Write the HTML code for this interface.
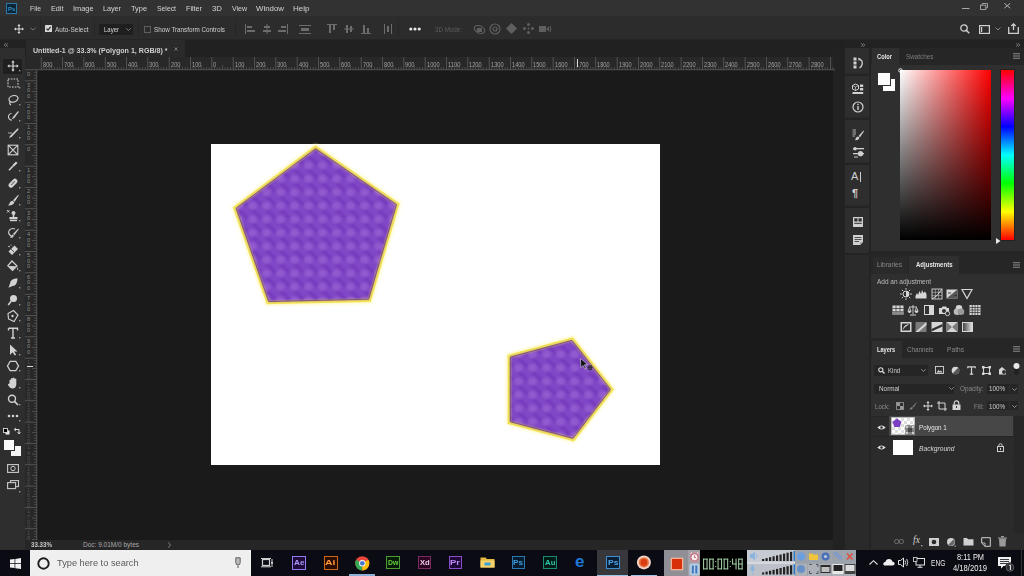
<!DOCTYPE html><html><head><meta charset="utf-8"><style>
*{margin:0;padding:0;box-sizing:border-box}
html,body{width:1024px;height:576px;overflow:hidden;background:#1a1a1a;font-family:"Liberation Sans",sans-serif;color:#ccc}
.a{position:absolute}
.t{position:absolute;white-space:nowrap;line-height:1;transform-origin:0 0}
svg{position:absolute;overflow:visible}
</style></head><body>
<div class="a" style="left:0px;top:0px;width:1024px;height:16px;background:#323232;"></div>
<div class="a" style="left:0px;top:16px;width:1024px;height:23px;background:#2c2c2c;"></div>
<div class="a" style="left:0px;top:39px;width:1024px;height:1px;background:#252525;"></div>
<div class="a" style="left:0px;top:40px;width:1024px;height:8px;background:#222222;"></div>
<div class="a" style="left:0px;top:48px;width:25px;height:502px;background:#2e2e2e;"></div>
<div class="a" style="left:25px;top:40px;width:820px;height:17px;background:#212121;"></div>
<div class="a" style="left:26px;top:40px;width:159px;height:17px;background:#2a2a2a;"></div>
<div class="a" style="left:25px;top:57px;width:810px;height:13px;background:#282828;"></div>
<div class="a" style="left:25px;top:70px;width:12px;height:470px;background:#282828;"></div>
<div class="a" style="left:37px;top:70px;width:796px;height:470px;background:#1a1a1a;"></div>
<div class="a" style="left:833px;top:48px;width:12px;height:502px;background:#222222;"></div>
<div class="a" style="left:845px;top:48px;width:24px;height:502px;background:#2a2a2a;"></div>
<div class="a" style="left:869px;top:48px;width:155px;height:502px;background:#282828;"></div>
<div class="a" style="left:211px;top:144px;width:449px;height:321px;background:#ffffff;"></div>
<div class="a" style="left:25px;top:540px;width:808px;height:10px;background:#262626;"></div>
<div class="a" style="left:0px;top:550px;width:1024px;height:26px;background:#0b0b14;"></div>
<div class="a" style="left:30px;top:550px;width:221px;height:26px;background:#efefef;"></div>
<svg style="left:6px;top:3px;" width="11" height="11" viewBox="0 0 11 11"><rect x="0.5" y="0.5" width="10" height="10" fill="#0d2536" stroke="#2a7aa6" stroke-width="1"/><text x="2" y="8" font-size="6" font-family="Liberation Sans" font-weight="bold" fill="#3a90c4">Ps</text></svg>
<div class="t" style="left:30.00px;top:4.95px;font-size:7.5px;color:#d4d4d4;transform:scaleX(0.910);">File</div>
<div class="t" style="left:51.00px;top:4.95px;font-size:7.5px;color:#d4d4d4;transform:scaleX(0.967);">Edit</div>
<div class="t" style="left:73.00px;top:4.95px;font-size:7.5px;color:#d4d4d4;transform:scaleX(0.984);">Image</div>
<div class="t" style="left:103.00px;top:4.95px;font-size:7.5px;color:#d4d4d4;transform:scaleX(0.960);">Layer</div>
<div class="t" style="left:131.00px;top:4.95px;font-size:7.5px;color:#d4d4d4;transform:scaleX(0.984);">Type</div>
<div class="t" style="left:157.00px;top:4.95px;font-size:7.5px;color:#d4d4d4;transform:scaleX(0.912);">Select</div>
<div class="t" style="left:186.00px;top:4.95px;font-size:7.5px;color:#d4d4d4;transform:scaleX(0.960);">Filter</div>
<div class="t" style="left:212.00px;top:4.95px;font-size:7.5px;color:#d4d4d4;transform:scaleX(1.043);">3D</div>
<div class="t" style="left:231.50px;top:4.95px;font-size:7.5px;color:#d4d4d4;transform:scaleX(0.931);">View</div>
<div class="t" style="left:256.00px;top:4.95px;font-size:7.5px;color:#d4d4d4;transform:scaleX(1.050);">Window</div>
<div class="t" style="left:293.00px;top:4.95px;font-size:7.5px;color:#d4d4d4;transform:scaleX(1.070);">Help</div>
<svg style="left:961.5px;top:7.5px;" width="8" height="1" viewBox="0 0 8 1"><rect x="0" y="0" width="7.5" height="1" fill="#a8a8a8"/></svg>
<svg style="left:980px;top:3px;" width="8" height="7" viewBox="0 0 8 7"><path d="M2.2 2.2V0.5H7.5V4.8H5.8" fill="none" stroke="#a8a8a8" stroke-width="0.9"/><rect x="0.5" y="2.2" width="5.3" height="4.3" fill="none" stroke="#a8a8a8" stroke-width="0.9"/></svg>
<svg style="left:1004px;top:3.3px;" width="7" height="5.5" viewBox="0 0 7 5.5"><path d="M0.3 0.3L6.3 5.2M6.3 0.3L0.3 5.2" stroke="#b0b0b0" stroke-width="1"/></svg>
<svg style="left:14px;top:24px;" width="10" height="10" viewBox="0 0 10 10"><path d="M5 1V9M1 5H9" stroke="#dcdcdc" stroke-width="1"/><path d="M5 0L3.4 2H6.6ZM5 10L3.4 8H6.6ZM0 5L2 3.4V6.6ZM10 5L8 3.4V6.6Z" fill="#dcdcdc"/></svg>
<svg style="left:30px;top:27px;" width="6" height="4" viewBox="0 0 6 4"><path d="M0.5 0.8L3 3L5.5 0.8" fill="none" stroke="#777" stroke-width="1"/></svg>
<div class="a" style="left:40px;top:19px;width:1px;height:17px;background:#262626;"></div>
<svg style="left:45px;top:25px;" width="7" height="7" viewBox="0 0 7 7"><rect x="0" y="0" width="7" height="7" rx="0.5" fill="#d6d6d6"/><path d="M1.5 3.6L3 5.1L5.6 1.9" fill="none" stroke="#2a2a2a" stroke-width="1.2"/></svg>
<div class="t" style="left:54.50px;top:25.57px;font-size:7px;color:#cfcfcf;transform:scaleX(0.926);">Auto-Select</div>
<div class="a" style="left:94px;top:19px;width:1px;height:17px;background:#262626;"></div>
<div class="a" style="left:99px;top:24px;width:34px;height:11px;background:#1f1f1f;"></div>
<div class="t" style="left:104.00px;top:26.07px;font-size:7px;color:#d8d8d8;transform:scaleX(0.857);">Layer</div>
<svg style="left:126px;top:28px;" width="5" height="3" viewBox="0 0 5 3"><path d="M0.3 0.3L2.5 2.5L4.7 0.3" fill="none" stroke="#888" stroke-width="0.9"/></svg>
<div class="a" style="left:138px;top:19px;width:1px;height:17px;background:#262626;"></div>
<svg style="left:144px;top:26px;" width="7" height="7" viewBox="0 0 7 7"><rect x="0.5" y="0.5" width="6" height="6" fill="none" stroke="#5e5e5e" stroke-width="1"/></svg>
<div class="t" style="left:153.70px;top:25.57px;font-size:7px;color:#cfcfcf;transform:scaleX(0.899);">Show Transform Controls</div>
<div class="a" style="left:235px;top:19px;width:1px;height:17px;background:#262626;"></div>
<svg style="left:245px;top:24px;" width="10" height="10" viewBox="0 0 10 10"><rect x="0" y="0" width="1" height="10" fill="#6c6c6c"/><rect x="2" y="2" width="5" height="2" fill="#6c6c6c"/><rect x="2" y="6" width="8" height="2" fill="#6c6c6c"/></svg>
<svg style="left:262px;top:24px;" width="10" height="10" viewBox="0 0 10 10"><rect x="4.5" y="0" width="1" height="10" fill="#6c6c6c"/><rect x="2" y="2" width="6" height="2" fill="#6c6c6c"/><rect x="1" y="6" width="8" height="2" fill="#6c6c6c"/></svg>
<svg style="left:278px;top:24px;" width="10" height="10" viewBox="0 0 10 10"><rect x="9" y="0" width="1" height="10" fill="#6c6c6c"/><rect x="3" y="2" width="5" height="2" fill="#6c6c6c"/><rect x="0" y="6" width="8" height="2" fill="#6c6c6c"/></svg>
<svg style="left:299px;top:25px;" width="12" height="9" viewBox="0 0 12 9"><rect x="0" y="0" width="12" height="1" fill="#6c6c6c"/><rect x="2" y="3" width="8" height="3" fill="#6c6c6c"/><rect x="0" y="8" width="12" height="1" fill="#6c6c6c"/></svg>
<svg style="left:327px;top:24px;" width="10" height="10" viewBox="0 0 10 10"><rect x="0" y="0" width="10" height="1" fill="#6c6c6c"/><rect x="2" y="1" width="2" height="8" fill="#6c6c6c"/><rect x="6" y="1" width="2" height="5" fill="#6c6c6c"/></svg>
<svg style="left:344px;top:24px;" width="10" height="10" viewBox="0 0 10 10"><rect x="0" y="4.5" width="10" height="1" fill="#6c6c6c"/><rect x="2" y="1" width="2" height="8" fill="#6c6c6c"/><rect x="6" y="2" width="2" height="6" fill="#6c6c6c"/></svg>
<svg style="left:361px;top:24px;" width="10" height="10" viewBox="0 0 10 10"><rect x="0" y="9" width="10" height="1" fill="#6c6c6c"/><rect x="2" y="1" width="2" height="8" fill="#6c6c6c"/><rect x="6" y="4" width="2" height="5" fill="#6c6c6c"/></svg>
<svg style="left:384px;top:24px;" width="8" height="10" viewBox="0 0 8 10"><rect x="0" y="0" width="1" height="10" fill="#6c6c6c"/><rect x="7" y="0" width="1" height="10" fill="#6c6c6c"/><rect x="3" y="2" width="2" height="6" fill="#6c6c6c"/></svg>
<div class="a" style="left:398px;top:19px;width:1px;height:17px;background:#262626;"></div>
<svg style="left:409px;top:27px;" width="12" height="4" viewBox="0 0 12 4"><circle cx="1.8" cy="2" r="1.6" fill="#e6e6e6"/><circle cx="6" cy="2" r="1.6" fill="#e6e6e6"/><circle cx="10.2" cy="2" r="1.6" fill="#e6e6e6"/></svg>
<div class="t" style="left:435.00px;top:25.57px;font-size:7px;color:#5c5c5c;transform:scaleX(0.890);">3D Mode:</div>
<svg style="left:473px;top:24px;" width="13" height="11" viewBox="0 0 13 11"><ellipse cx="6.5" cy="5.5" rx="5.5" ry="3.5" fill="none" stroke="#5f5f5f" stroke-width="1.2" transform="rotate(25 6.5 5.5)"/><rect x="4" y="4" width="5" height="4" fill="#5f5f5f"/></svg>
<svg style="left:489px;top:23px;" width="12" height="12" viewBox="0 0 12 12"><circle cx="6" cy="6" r="5" fill="none" stroke="#5f5f5f" stroke-width="1.2"/><circle cx="6" cy="6" r="2" fill="none" stroke="#5f5f5f" stroke-width="1.2"/></svg>
<svg style="left:506px;top:23px;" width="11" height="11" viewBox="0 0 11 11"><path d="M5.5 0L11 5.5L5.5 11L0 5.5Z" fill="#5f5f5f"/></svg>
<svg style="left:523px;top:23px;" width="11" height="11" viewBox="0 0 11 11"><circle cx="5.5" cy="1.5" r="1.5" fill="#5f5f5f"/><circle cx="5.5" cy="9.5" r="1.5" fill="#5f5f5f"/><circle cx="1.5" cy="5.5" r="1.5" fill="#5f5f5f"/><circle cx="9.5" cy="5.5" r="1.5" fill="#5f5f5f"/><circle cx="5.5" cy="5.5" r="1" fill="#5f5f5f"/></svg>
<svg style="left:539px;top:25px;" width="12" height="8" viewBox="0 0 12 8"><rect x="0" y="1" width="7" height="6" fill="#5f5f5f"/><path d="M7 4L10 1.5V6.5Z" fill="#5f5f5f"/><path d="M11 1Q12.5 4 11 7" fill="none" stroke="#5f5f5f"/></svg>
<svg style="left:960px;top:24px;" width="10" height="10" viewBox="0 0 10 10"><circle cx="4" cy="4" r="3.2" fill="none" stroke="#cfcfcf" stroke-width="1.3"/><path d="M6.3 6.3L9.3 9.3" stroke="#cfcfcf" stroke-width="1.5"/></svg>
<svg style="left:979px;top:25px;" width="11" height="9" viewBox="0 0 11 9"><rect x="0.6" y="0.6" width="9.8" height="7.8" fill="none" stroke="#cfcfcf" stroke-width="1.2"/><rect x="2" y="2" width="1.2" height="5" fill="#cfcfcf"/></svg>
<svg style="left:995px;top:27px;" width="6" height="4" viewBox="0 0 6 4"><path d="M0.5 0.5L3 3L5.5 0.5" fill="none" stroke="#888" stroke-width="1"/></svg>
<svg style="left:1008px;top:23px;" width="11" height="11" viewBox="0 0 11 11"><path d="M0.7 4V10.3H10.3V4" fill="none" stroke="#cfcfcf" stroke-width="1.3"/><path d="M5.5 7V1M3.3 3L5.5 0.8L7.7 3" fill="none" stroke="#cfcfcf" stroke-width="1.3"/></svg>
<div class="t" style="left:32.70px;top:46.65px;font-size:7.5px;color:#d0d0d0;font-weight:bold;transform:scaleX(0.945);">Untitled-1 @ 33.3% (Polygon 1, RGB/8) *</div>
<svg style="left:174px;top:47px;" width="4" height="4" viewBox="0 0 4 4"><path d="M0.5 0.5L3.5 3.5M3.5 0.5L0.5 3.5" stroke="#777" stroke-width="1"/></svg>
<svg style="left:4px;top:42.5px;" width="4" height="4" viewBox="0 0 4 4"><path d="M1.7 0.3L0.3 2L1.7 3.7M3.7 0.3L2.3 2L3.7 3.7" fill="none" stroke="#8a8a8a" stroke-width="0.8"/></svg>
<svg style="left:861px;top:42.5px;" width="4" height="4" viewBox="0 0 4 4"><path d="M0.3 0.3L1.7 2L0.3 3.7M2.3 0.3L3.7 2L2.3 3.7" fill="none" stroke="#8a8a8a" stroke-width="0.8"/></svg>
<svg style="left:1016px;top:42.5px;" width="4" height="4" viewBox="0 0 4 4"><path d="M0.3 0.3L1.7 2L0.3 3.7M2.3 0.3L3.7 2L2.3 3.7" fill="none" stroke="#8a8a8a" stroke-width="0.8"/></svg>
<svg style="left:25px;top:57px;" width="810" height="13" viewBox="0 0 810 13"><rect x="15.86" y="0" width="0.7" height="13" fill="#646464"/><rect x="18.53" y="10" width="0.6" height="3" fill="#5e5e5e"/><rect x="21.19" y="10" width="0.6" height="3" fill="#5e5e5e"/><rect x="23.86" y="10" width="0.6" height="3" fill="#5e5e5e"/><rect x="26.53" y="8" width="0.6" height="5" fill="#646464"/><rect x="29.19" y="10" width="0.6" height="3" fill="#5e5e5e"/><rect x="31.86" y="10" width="0.6" height="3" fill="#5e5e5e"/><rect x="34.52" y="10" width="0.6" height="3" fill="#5e5e5e"/><rect x="37.19" y="0" width="0.7" height="13" fill="#646464"/><rect x="39.86" y="10" width="0.6" height="3" fill="#5e5e5e"/><rect x="42.52" y="10" width="0.6" height="3" fill="#5e5e5e"/><rect x="45.19" y="10" width="0.6" height="3" fill="#5e5e5e"/><rect x="47.85" y="8" width="0.6" height="5" fill="#646464"/><rect x="50.52" y="10" width="0.6" height="3" fill="#5e5e5e"/><rect x="53.19" y="10" width="0.6" height="3" fill="#5e5e5e"/><rect x="55.85" y="10" width="0.6" height="3" fill="#5e5e5e"/><rect x="58.52" y="0" width="0.7" height="13" fill="#646464"/><rect x="61.19" y="10" width="0.6" height="3" fill="#5e5e5e"/><rect x="63.85" y="10" width="0.6" height="3" fill="#5e5e5e"/><rect x="66.52" y="10" width="0.6" height="3" fill="#5e5e5e"/><rect x="69.19" y="8" width="0.6" height="5" fill="#646464"/><rect x="71.85" y="10" width="0.6" height="3" fill="#5e5e5e"/><rect x="74.52" y="10" width="0.6" height="3" fill="#5e5e5e"/><rect x="77.18" y="10" width="0.6" height="3" fill="#5e5e5e"/><rect x="79.85" y="0" width="0.7" height="13" fill="#646464"/><rect x="82.52" y="10" width="0.6" height="3" fill="#5e5e5e"/><rect x="85.18" y="10" width="0.6" height="3" fill="#5e5e5e"/><rect x="87.85" y="10" width="0.6" height="3" fill="#5e5e5e"/><rect x="90.52" y="8" width="0.6" height="5" fill="#646464"/><rect x="93.18" y="10" width="0.6" height="3" fill="#5e5e5e"/><rect x="95.85" y="10" width="0.6" height="3" fill="#5e5e5e"/><rect x="98.51" y="10" width="0.6" height="3" fill="#5e5e5e"/><rect x="101.18" y="0" width="0.7" height="13" fill="#646464"/><rect x="103.85" y="10" width="0.6" height="3" fill="#5e5e5e"/><rect x="106.51" y="10" width="0.6" height="3" fill="#5e5e5e"/><rect x="109.18" y="10" width="0.6" height="3" fill="#5e5e5e"/><rect x="111.84" y="8" width="0.6" height="5" fill="#646464"/><rect x="114.51" y="10" width="0.6" height="3" fill="#5e5e5e"/><rect x="117.18" y="10" width="0.6" height="3" fill="#5e5e5e"/><rect x="119.84" y="10" width="0.6" height="3" fill="#5e5e5e"/><rect x="122.51" y="0" width="0.7" height="13" fill="#646464"/><rect x="125.18" y="10" width="0.6" height="3" fill="#5e5e5e"/><rect x="127.84" y="10" width="0.6" height="3" fill="#5e5e5e"/><rect x="130.51" y="10" width="0.6" height="3" fill="#5e5e5e"/><rect x="133.17" y="8" width="0.6" height="5" fill="#646464"/><rect x="135.84" y="10" width="0.6" height="3" fill="#5e5e5e"/><rect x="138.51" y="10" width="0.6" height="3" fill="#5e5e5e"/><rect x="141.17" y="10" width="0.6" height="3" fill="#5e5e5e"/><rect x="143.84" y="0" width="0.7" height="13" fill="#646464"/><rect x="146.51" y="10" width="0.6" height="3" fill="#5e5e5e"/><rect x="149.17" y="10" width="0.6" height="3" fill="#5e5e5e"/><rect x="151.84" y="10" width="0.6" height="3" fill="#5e5e5e"/><rect x="154.50" y="8" width="0.6" height="5" fill="#646464"/><rect x="157.17" y="10" width="0.6" height="3" fill="#5e5e5e"/><rect x="159.84" y="10" width="0.6" height="3" fill="#5e5e5e"/><rect x="162.50" y="10" width="0.6" height="3" fill="#5e5e5e"/><rect x="165.17" y="0" width="0.7" height="13" fill="#646464"/><rect x="167.84" y="10" width="0.6" height="3" fill="#5e5e5e"/><rect x="170.50" y="10" width="0.6" height="3" fill="#5e5e5e"/><rect x="173.17" y="10" width="0.6" height="3" fill="#5e5e5e"/><rect x="175.84" y="8" width="0.6" height="5" fill="#646464"/><rect x="178.50" y="10" width="0.6" height="3" fill="#5e5e5e"/><rect x="181.17" y="10" width="0.6" height="3" fill="#5e5e5e"/><rect x="183.83" y="10" width="0.6" height="3" fill="#5e5e5e"/><rect x="186.50" y="0" width="0.7" height="13" fill="#646464"/><rect x="189.17" y="10" width="0.6" height="3" fill="#5e5e5e"/><rect x="191.83" y="10" width="0.6" height="3" fill="#5e5e5e"/><rect x="194.50" y="10" width="0.6" height="3" fill="#5e5e5e"/><rect x="197.16" y="8" width="0.6" height="5" fill="#646464"/><rect x="199.83" y="10" width="0.6" height="3" fill="#5e5e5e"/><rect x="202.50" y="10" width="0.6" height="3" fill="#5e5e5e"/><rect x="205.16" y="10" width="0.6" height="3" fill="#5e5e5e"/><rect x="207.83" y="0" width="0.7" height="13" fill="#646464"/><rect x="210.50" y="10" width="0.6" height="3" fill="#5e5e5e"/><rect x="213.16" y="10" width="0.6" height="3" fill="#5e5e5e"/><rect x="215.83" y="10" width="0.6" height="3" fill="#5e5e5e"/><rect x="218.49" y="8" width="0.6" height="5" fill="#646464"/><rect x="221.16" y="10" width="0.6" height="3" fill="#5e5e5e"/><rect x="223.83" y="10" width="0.6" height="3" fill="#5e5e5e"/><rect x="226.49" y="10" width="0.6" height="3" fill="#5e5e5e"/><rect x="229.16" y="0" width="0.7" height="13" fill="#646464"/><rect x="231.83" y="10" width="0.6" height="3" fill="#5e5e5e"/><rect x="234.49" y="10" width="0.6" height="3" fill="#5e5e5e"/><rect x="237.16" y="10" width="0.6" height="3" fill="#5e5e5e"/><rect x="239.82" y="8" width="0.6" height="5" fill="#646464"/><rect x="242.49" y="10" width="0.6" height="3" fill="#5e5e5e"/><rect x="245.16" y="10" width="0.6" height="3" fill="#5e5e5e"/><rect x="247.82" y="10" width="0.6" height="3" fill="#5e5e5e"/><rect x="250.49" y="0" width="0.7" height="13" fill="#646464"/><rect x="253.16" y="10" width="0.6" height="3" fill="#5e5e5e"/><rect x="255.82" y="10" width="0.6" height="3" fill="#5e5e5e"/><rect x="258.49" y="10" width="0.6" height="3" fill="#5e5e5e"/><rect x="261.16" y="8" width="0.6" height="5" fill="#646464"/><rect x="263.82" y="10" width="0.6" height="3" fill="#5e5e5e"/><rect x="266.49" y="10" width="0.6" height="3" fill="#5e5e5e"/><rect x="269.15" y="10" width="0.6" height="3" fill="#5e5e5e"/><rect x="271.82" y="0" width="0.7" height="13" fill="#646464"/><rect x="274.49" y="10" width="0.6" height="3" fill="#5e5e5e"/><rect x="277.15" y="10" width="0.6" height="3" fill="#5e5e5e"/><rect x="279.82" y="10" width="0.6" height="3" fill="#5e5e5e"/><rect x="282.49" y="8" width="0.6" height="5" fill="#646464"/><rect x="285.15" y="10" width="0.6" height="3" fill="#5e5e5e"/><rect x="287.82" y="10" width="0.6" height="3" fill="#5e5e5e"/><rect x="290.48" y="10" width="0.6" height="3" fill="#5e5e5e"/><rect x="293.15" y="0" width="0.7" height="13" fill="#646464"/><rect x="295.82" y="10" width="0.6" height="3" fill="#5e5e5e"/><rect x="298.48" y="10" width="0.6" height="3" fill="#5e5e5e"/><rect x="301.15" y="10" width="0.6" height="3" fill="#5e5e5e"/><rect x="303.81" y="8" width="0.6" height="5" fill="#646464"/><rect x="306.48" y="10" width="0.6" height="3" fill="#5e5e5e"/><rect x="309.15" y="10" width="0.6" height="3" fill="#5e5e5e"/><rect x="311.81" y="10" width="0.6" height="3" fill="#5e5e5e"/><rect x="314.48" y="0" width="0.7" height="13" fill="#646464"/><rect x="317.15" y="10" width="0.6" height="3" fill="#5e5e5e"/><rect x="319.81" y="10" width="0.6" height="3" fill="#5e5e5e"/><rect x="322.48" y="10" width="0.6" height="3" fill="#5e5e5e"/><rect x="325.15" y="8" width="0.6" height="5" fill="#646464"/><rect x="327.81" y="10" width="0.6" height="3" fill="#5e5e5e"/><rect x="330.48" y="10" width="0.6" height="3" fill="#5e5e5e"/><rect x="333.14" y="10" width="0.6" height="3" fill="#5e5e5e"/><rect x="335.81" y="0" width="0.7" height="13" fill="#646464"/><rect x="338.48" y="10" width="0.6" height="3" fill="#5e5e5e"/><rect x="341.14" y="10" width="0.6" height="3" fill="#5e5e5e"/><rect x="343.81" y="10" width="0.6" height="3" fill="#5e5e5e"/><rect x="346.48" y="8" width="0.6" height="5" fill="#646464"/><rect x="349.14" y="10" width="0.6" height="3" fill="#5e5e5e"/><rect x="351.81" y="10" width="0.6" height="3" fill="#5e5e5e"/><rect x="354.47" y="10" width="0.6" height="3" fill="#5e5e5e"/><rect x="357.14" y="0" width="0.7" height="13" fill="#646464"/><rect x="359.81" y="10" width="0.6" height="3" fill="#5e5e5e"/><rect x="362.47" y="10" width="0.6" height="3" fill="#5e5e5e"/><rect x="365.14" y="10" width="0.6" height="3" fill="#5e5e5e"/><rect x="367.81" y="8" width="0.6" height="5" fill="#646464"/><rect x="370.47" y="10" width="0.6" height="3" fill="#5e5e5e"/><rect x="373.14" y="10" width="0.6" height="3" fill="#5e5e5e"/><rect x="375.80" y="10" width="0.6" height="3" fill="#5e5e5e"/><rect x="378.47" y="0" width="0.7" height="13" fill="#646464"/><rect x="381.14" y="10" width="0.6" height="3" fill="#5e5e5e"/><rect x="383.80" y="10" width="0.6" height="3" fill="#5e5e5e"/><rect x="386.47" y="10" width="0.6" height="3" fill="#5e5e5e"/><rect x="389.13" y="8" width="0.6" height="5" fill="#646464"/><rect x="391.80" y="10" width="0.6" height="3" fill="#5e5e5e"/><rect x="394.47" y="10" width="0.6" height="3" fill="#5e5e5e"/><rect x="397.13" y="10" width="0.6" height="3" fill="#5e5e5e"/><rect x="399.80" y="0" width="0.7" height="13" fill="#646464"/><rect x="402.47" y="10" width="0.6" height="3" fill="#5e5e5e"/><rect x="405.13" y="10" width="0.6" height="3" fill="#5e5e5e"/><rect x="407.80" y="10" width="0.6" height="3" fill="#5e5e5e"/><rect x="410.46" y="8" width="0.6" height="5" fill="#646464"/><rect x="413.13" y="10" width="0.6" height="3" fill="#5e5e5e"/><rect x="415.80" y="10" width="0.6" height="3" fill="#5e5e5e"/><rect x="418.46" y="10" width="0.6" height="3" fill="#5e5e5e"/><rect x="421.13" y="0" width="0.7" height="13" fill="#646464"/><rect x="423.80" y="10" width="0.6" height="3" fill="#5e5e5e"/><rect x="426.46" y="10" width="0.6" height="3" fill="#5e5e5e"/><rect x="429.13" y="10" width="0.6" height="3" fill="#5e5e5e"/><rect x="431.80" y="8" width="0.6" height="5" fill="#646464"/><rect x="434.46" y="10" width="0.6" height="3" fill="#5e5e5e"/><rect x="437.13" y="10" width="0.6" height="3" fill="#5e5e5e"/><rect x="439.79" y="10" width="0.6" height="3" fill="#5e5e5e"/><rect x="442.46" y="0" width="0.7" height="13" fill="#646464"/><rect x="445.13" y="10" width="0.6" height="3" fill="#5e5e5e"/><rect x="447.79" y="10" width="0.6" height="3" fill="#5e5e5e"/><rect x="450.46" y="10" width="0.6" height="3" fill="#5e5e5e"/><rect x="453.12" y="8" width="0.6" height="5" fill="#646464"/><rect x="455.79" y="10" width="0.6" height="3" fill="#5e5e5e"/><rect x="458.46" y="10" width="0.6" height="3" fill="#5e5e5e"/><rect x="461.12" y="10" width="0.6" height="3" fill="#5e5e5e"/><rect x="463.79" y="0" width="0.7" height="13" fill="#646464"/><rect x="466.46" y="10" width="0.6" height="3" fill="#5e5e5e"/><rect x="469.12" y="10" width="0.6" height="3" fill="#5e5e5e"/><rect x="471.79" y="10" width="0.6" height="3" fill="#5e5e5e"/><rect x="474.45" y="8" width="0.6" height="5" fill="#646464"/><rect x="477.12" y="10" width="0.6" height="3" fill="#5e5e5e"/><rect x="479.79" y="10" width="0.6" height="3" fill="#5e5e5e"/><rect x="482.45" y="10" width="0.6" height="3" fill="#5e5e5e"/><rect x="485.12" y="0" width="0.7" height="13" fill="#646464"/><rect x="487.79" y="10" width="0.6" height="3" fill="#5e5e5e"/><rect x="490.45" y="10" width="0.6" height="3" fill="#5e5e5e"/><rect x="493.12" y="10" width="0.6" height="3" fill="#5e5e5e"/><rect x="495.78" y="8" width="0.6" height="5" fill="#646464"/><rect x="498.45" y="10" width="0.6" height="3" fill="#5e5e5e"/><rect x="501.12" y="10" width="0.6" height="3" fill="#5e5e5e"/><rect x="503.78" y="10" width="0.6" height="3" fill="#5e5e5e"/><rect x="506.45" y="0" width="0.7" height="13" fill="#646464"/><rect x="509.12" y="10" width="0.6" height="3" fill="#5e5e5e"/><rect x="511.78" y="10" width="0.6" height="3" fill="#5e5e5e"/><rect x="514.45" y="10" width="0.6" height="3" fill="#5e5e5e"/><rect x="517.12" y="8" width="0.6" height="5" fill="#646464"/><rect x="519.78" y="10" width="0.6" height="3" fill="#5e5e5e"/><rect x="522.45" y="10" width="0.6" height="3" fill="#5e5e5e"/><rect x="525.11" y="10" width="0.6" height="3" fill="#5e5e5e"/><rect x="527.78" y="0" width="0.7" height="13" fill="#646464"/><rect x="530.45" y="10" width="0.6" height="3" fill="#5e5e5e"/><rect x="533.11" y="10" width="0.6" height="3" fill="#5e5e5e"/><rect x="535.78" y="10" width="0.6" height="3" fill="#5e5e5e"/><rect x="538.44" y="8" width="0.6" height="5" fill="#646464"/><rect x="541.11" y="10" width="0.6" height="3" fill="#5e5e5e"/><rect x="543.78" y="10" width="0.6" height="3" fill="#5e5e5e"/><rect x="546.44" y="10" width="0.6" height="3" fill="#5e5e5e"/><rect x="549.11" y="0" width="0.7" height="13" fill="#646464"/><rect x="551.78" y="10" width="0.6" height="3" fill="#5e5e5e"/><rect x="554.44" y="10" width="0.6" height="3" fill="#5e5e5e"/><rect x="557.11" y="10" width="0.6" height="3" fill="#5e5e5e"/><rect x="559.77" y="8" width="0.6" height="5" fill="#646464"/><rect x="562.44" y="10" width="0.6" height="3" fill="#5e5e5e"/><rect x="565.11" y="10" width="0.6" height="3" fill="#5e5e5e"/><rect x="567.77" y="10" width="0.6" height="3" fill="#5e5e5e"/><rect x="570.44" y="0" width="0.7" height="13" fill="#646464"/><rect x="573.11" y="10" width="0.6" height="3" fill="#5e5e5e"/><rect x="575.77" y="10" width="0.6" height="3" fill="#5e5e5e"/><rect x="578.44" y="10" width="0.6" height="3" fill="#5e5e5e"/><rect x="581.10" y="8" width="0.6" height="5" fill="#646464"/><rect x="583.77" y="10" width="0.6" height="3" fill="#5e5e5e"/><rect x="586.44" y="10" width="0.6" height="3" fill="#5e5e5e"/><rect x="589.10" y="10" width="0.6" height="3" fill="#5e5e5e"/><rect x="591.77" y="0" width="0.7" height="13" fill="#646464"/><rect x="594.44" y="10" width="0.6" height="3" fill="#5e5e5e"/><rect x="597.10" y="10" width="0.6" height="3" fill="#5e5e5e"/><rect x="599.77" y="10" width="0.6" height="3" fill="#5e5e5e"/><rect x="602.43" y="8" width="0.6" height="5" fill="#646464"/><rect x="605.10" y="10" width="0.6" height="3" fill="#5e5e5e"/><rect x="607.77" y="10" width="0.6" height="3" fill="#5e5e5e"/><rect x="610.43" y="10" width="0.6" height="3" fill="#5e5e5e"/><rect x="613.10" y="0" width="0.7" height="13" fill="#646464"/><rect x="615.77" y="10" width="0.6" height="3" fill="#5e5e5e"/><rect x="618.43" y="10" width="0.6" height="3" fill="#5e5e5e"/><rect x="621.10" y="10" width="0.6" height="3" fill="#5e5e5e"/><rect x="623.76" y="8" width="0.6" height="5" fill="#646464"/><rect x="626.43" y="10" width="0.6" height="3" fill="#5e5e5e"/><rect x="629.10" y="10" width="0.6" height="3" fill="#5e5e5e"/><rect x="631.76" y="10" width="0.6" height="3" fill="#5e5e5e"/><rect x="634.43" y="0" width="0.7" height="13" fill="#646464"/><rect x="637.10" y="10" width="0.6" height="3" fill="#5e5e5e"/><rect x="639.76" y="10" width="0.6" height="3" fill="#5e5e5e"/><rect x="642.43" y="10" width="0.6" height="3" fill="#5e5e5e"/><rect x="645.09" y="8" width="0.6" height="5" fill="#646464"/><rect x="647.76" y="10" width="0.6" height="3" fill="#5e5e5e"/><rect x="650.43" y="10" width="0.6" height="3" fill="#5e5e5e"/><rect x="653.09" y="10" width="0.6" height="3" fill="#5e5e5e"/><rect x="655.76" y="0" width="0.7" height="13" fill="#646464"/><rect x="658.43" y="10" width="0.6" height="3" fill="#5e5e5e"/><rect x="661.09" y="10" width="0.6" height="3" fill="#5e5e5e"/><rect x="663.76" y="10" width="0.6" height="3" fill="#5e5e5e"/><rect x="666.42" y="8" width="0.6" height="5" fill="#646464"/><rect x="669.09" y="10" width="0.6" height="3" fill="#5e5e5e"/><rect x="671.76" y="10" width="0.6" height="3" fill="#5e5e5e"/><rect x="674.42" y="10" width="0.6" height="3" fill="#5e5e5e"/><rect x="677.09" y="0" width="0.7" height="13" fill="#646464"/><rect x="679.76" y="10" width="0.6" height="3" fill="#5e5e5e"/><rect x="682.42" y="10" width="0.6" height="3" fill="#5e5e5e"/><rect x="685.09" y="10" width="0.6" height="3" fill="#5e5e5e"/><rect x="687.75" y="8" width="0.6" height="5" fill="#646464"/><rect x="690.42" y="10" width="0.6" height="3" fill="#5e5e5e"/><rect x="693.09" y="10" width="0.6" height="3" fill="#5e5e5e"/><rect x="695.75" y="10" width="0.6" height="3" fill="#5e5e5e"/><rect x="698.42" y="0" width="0.7" height="13" fill="#646464"/><rect x="701.09" y="10" width="0.6" height="3" fill="#5e5e5e"/><rect x="703.75" y="10" width="0.6" height="3" fill="#5e5e5e"/><rect x="706.42" y="10" width="0.6" height="3" fill="#5e5e5e"/><rect x="709.08" y="8" width="0.6" height="5" fill="#646464"/><rect x="711.75" y="10" width="0.6" height="3" fill="#5e5e5e"/><rect x="714.42" y="10" width="0.6" height="3" fill="#5e5e5e"/><rect x="717.08" y="10" width="0.6" height="3" fill="#5e5e5e"/><rect x="719.75" y="0" width="0.7" height="13" fill="#646464"/><rect x="722.42" y="10" width="0.6" height="3" fill="#5e5e5e"/><rect x="725.08" y="10" width="0.6" height="3" fill="#5e5e5e"/><rect x="727.75" y="10" width="0.6" height="3" fill="#5e5e5e"/><rect x="730.41" y="8" width="0.6" height="5" fill="#646464"/><rect x="733.08" y="10" width="0.6" height="3" fill="#5e5e5e"/><rect x="735.75" y="10" width="0.6" height="3" fill="#5e5e5e"/><rect x="738.41" y="10" width="0.6" height="3" fill="#5e5e5e"/><rect x="741.08" y="0" width="0.7" height="13" fill="#646464"/><rect x="743.75" y="10" width="0.6" height="3" fill="#5e5e5e"/><rect x="746.41" y="10" width="0.6" height="3" fill="#5e5e5e"/><rect x="749.08" y="10" width="0.6" height="3" fill="#5e5e5e"/><rect x="751.74" y="8" width="0.6" height="5" fill="#646464"/><rect x="754.41" y="10" width="0.6" height="3" fill="#5e5e5e"/><rect x="757.08" y="10" width="0.6" height="3" fill="#5e5e5e"/><rect x="759.74" y="10" width="0.6" height="3" fill="#5e5e5e"/><rect x="762.41" y="0" width="0.7" height="13" fill="#646464"/><rect x="765.08" y="10" width="0.6" height="3" fill="#5e5e5e"/><rect x="767.74" y="10" width="0.6" height="3" fill="#5e5e5e"/><rect x="770.41" y="10" width="0.6" height="3" fill="#5e5e5e"/><rect x="773.07" y="8" width="0.6" height="5" fill="#646464"/><rect x="775.74" y="10" width="0.6" height="3" fill="#5e5e5e"/><rect x="778.41" y="10" width="0.6" height="3" fill="#5e5e5e"/><rect x="781.07" y="10" width="0.6" height="3" fill="#5e5e5e"/><rect x="783.74" y="0" width="0.7" height="13" fill="#646464"/><rect x="786.41" y="10" width="0.6" height="3" fill="#5e5e5e"/><rect x="789.07" y="10" width="0.6" height="3" fill="#5e5e5e"/><rect x="791.74" y="10" width="0.6" height="3" fill="#5e5e5e"/><rect x="794.40" y="8" width="0.6" height="5" fill="#646464"/><rect x="797.07" y="10" width="0.6" height="3" fill="#5e5e5e"/><rect x="799.74" y="10" width="0.6" height="3" fill="#5e5e5e"/><rect x="802.40" y="10" width="0.6" height="3" fill="#5e5e5e"/><rect x="805.07" y="0" width="0.7" height="13" fill="#646464"/><rect x="807.74" y="10" width="0.6" height="3" fill="#5e5e5e"/><rect x="0" y="12.4" width="810" height="0.8" fill="#5a5a5a"/></svg>
<div class="t" style="left:42.66px;top:62.07px;font-size:6.3px;color:#a0a0a0;transform:scaleX(0.899);">800</div>
<div class="t" style="left:63.99px;top:62.07px;font-size:6.3px;color:#a0a0a0;transform:scaleX(0.899);">700</div>
<div class="t" style="left:85.32px;top:62.07px;font-size:6.3px;color:#a0a0a0;transform:scaleX(0.899);">600</div>
<div class="t" style="left:106.65px;top:62.07px;font-size:6.3px;color:#a0a0a0;transform:scaleX(0.899);">500</div>
<div class="t" style="left:127.98px;top:62.07px;font-size:6.3px;color:#a0a0a0;transform:scaleX(0.899);">400</div>
<div class="t" style="left:149.31px;top:62.07px;font-size:6.3px;color:#a0a0a0;transform:scaleX(0.899);">300</div>
<div class="t" style="left:170.64px;top:62.07px;font-size:6.3px;color:#a0a0a0;transform:scaleX(0.899);">200</div>
<div class="t" style="left:191.97px;top:62.07px;font-size:6.3px;color:#a0a0a0;transform:scaleX(0.899);">100</div>
<div class="t" style="left:213.30px;top:62.07px;font-size:6.3px;color:#a0a0a0;transform:scaleX(0.899);">0</div>
<div class="t" style="left:234.63px;top:62.07px;font-size:6.3px;color:#a0a0a0;transform:scaleX(0.899);">100</div>
<div class="t" style="left:255.96px;top:62.07px;font-size:6.3px;color:#a0a0a0;transform:scaleX(0.899);">200</div>
<div class="t" style="left:277.29px;top:62.07px;font-size:6.3px;color:#a0a0a0;transform:scaleX(0.899);">300</div>
<div class="t" style="left:298.62px;top:62.07px;font-size:6.3px;color:#a0a0a0;transform:scaleX(0.899);">400</div>
<div class="t" style="left:319.95px;top:62.07px;font-size:6.3px;color:#a0a0a0;transform:scaleX(0.899);">500</div>
<div class="t" style="left:341.28px;top:62.07px;font-size:6.3px;color:#a0a0a0;transform:scaleX(0.899);">600</div>
<div class="t" style="left:362.61px;top:62.07px;font-size:6.3px;color:#a0a0a0;transform:scaleX(0.899);">700</div>
<div class="t" style="left:383.94px;top:62.07px;font-size:6.3px;color:#a0a0a0;transform:scaleX(0.899);">800</div>
<div class="t" style="left:405.27px;top:62.07px;font-size:6.3px;color:#a0a0a0;transform:scaleX(0.899);">900</div>
<div class="t" style="left:426.60px;top:62.07px;font-size:6.3px;color:#a0a0a0;transform:scaleX(0.899);">1000</div>
<div class="t" style="left:447.93px;top:62.07px;font-size:6.3px;color:#a0a0a0;transform:scaleX(0.930);">1100</div>
<div class="t" style="left:469.26px;top:62.07px;font-size:6.3px;color:#a0a0a0;transform:scaleX(0.899);">1200</div>
<div class="t" style="left:490.59px;top:62.07px;font-size:6.3px;color:#a0a0a0;transform:scaleX(0.899);">1300</div>
<div class="t" style="left:511.92px;top:62.07px;font-size:6.3px;color:#a0a0a0;transform:scaleX(0.899);">1400</div>
<div class="t" style="left:533.25px;top:62.07px;font-size:6.3px;color:#a0a0a0;transform:scaleX(0.899);">1500</div>
<div class="t" style="left:554.58px;top:62.07px;font-size:6.3px;color:#a0a0a0;transform:scaleX(0.899);">1600</div>
<div class="t" style="left:575.91px;top:62.07px;font-size:6.3px;color:#a0a0a0;transform:scaleX(0.899);">1700</div>
<div class="t" style="left:597.24px;top:62.07px;font-size:6.3px;color:#a0a0a0;transform:scaleX(0.899);">1800</div>
<div class="t" style="left:618.57px;top:62.07px;font-size:6.3px;color:#a0a0a0;transform:scaleX(0.899);">1900</div>
<div class="t" style="left:639.90px;top:62.07px;font-size:6.3px;color:#a0a0a0;transform:scaleX(0.899);">2000</div>
<div class="t" style="left:661.23px;top:62.07px;font-size:6.3px;color:#a0a0a0;transform:scaleX(0.899);">2100</div>
<div class="t" style="left:682.56px;top:62.07px;font-size:6.3px;color:#a0a0a0;transform:scaleX(0.899);">2200</div>
<div class="t" style="left:703.89px;top:62.07px;font-size:6.3px;color:#a0a0a0;transform:scaleX(0.899);">2300</div>
<div class="t" style="left:725.22px;top:62.07px;font-size:6.3px;color:#a0a0a0;transform:scaleX(0.899);">2400</div>
<div class="t" style="left:746.55px;top:62.07px;font-size:6.3px;color:#a0a0a0;transform:scaleX(0.899);">2500</div>
<div class="t" style="left:767.88px;top:62.07px;font-size:6.3px;color:#a0a0a0;transform:scaleX(0.899);">2600</div>
<div class="t" style="left:789.21px;top:62.07px;font-size:6.3px;color:#a0a0a0;transform:scaleX(0.899);">2700</div>
<div class="t" style="left:810.54px;top:62.07px;font-size:6.3px;color:#a0a0a0;transform:scaleX(0.899);">2800</div>
<svg style="left:25px;top:70px;" width="12" height="470" viewBox="0 0 12 470"><rect x="9" y="2.51" width="3" height="0.6" fill="#5e5e5e"/><rect x="9" y="5.18" width="3" height="0.6" fill="#5e5e5e"/><rect x="9" y="7.84" width="3" height="0.6" fill="#5e5e5e"/><rect x="0" y="10.51" width="12" height="0.7" fill="#646464"/><rect x="9" y="13.18" width="3" height="0.6" fill="#5e5e5e"/><rect x="9" y="15.84" width="3" height="0.6" fill="#5e5e5e"/><rect x="9" y="18.51" width="3" height="0.6" fill="#5e5e5e"/><rect x="7" y="21.18" width="5" height="0.6" fill="#646464"/><rect x="9" y="23.84" width="3" height="0.6" fill="#5e5e5e"/><rect x="9" y="26.51" width="3" height="0.6" fill="#5e5e5e"/><rect x="9" y="29.17" width="3" height="0.6" fill="#5e5e5e"/><rect x="0" y="31.84" width="12" height="0.7" fill="#646464"/><rect x="9" y="34.51" width="3" height="0.6" fill="#5e5e5e"/><rect x="9" y="37.17" width="3" height="0.6" fill="#5e5e5e"/><rect x="9" y="39.84" width="3" height="0.6" fill="#5e5e5e"/><rect x="7" y="42.50" width="5" height="0.6" fill="#646464"/><rect x="9" y="45.17" width="3" height="0.6" fill="#5e5e5e"/><rect x="9" y="47.84" width="3" height="0.6" fill="#5e5e5e"/><rect x="9" y="50.50" width="3" height="0.6" fill="#5e5e5e"/><rect x="0" y="53.17" width="12" height="0.7" fill="#646464"/><rect x="9" y="55.84" width="3" height="0.6" fill="#5e5e5e"/><rect x="9" y="58.50" width="3" height="0.6" fill="#5e5e5e"/><rect x="9" y="61.17" width="3" height="0.6" fill="#5e5e5e"/><rect x="7" y="63.84" width="5" height="0.6" fill="#646464"/><rect x="9" y="66.50" width="3" height="0.6" fill="#5e5e5e"/><rect x="9" y="69.17" width="3" height="0.6" fill="#5e5e5e"/><rect x="9" y="71.83" width="3" height="0.6" fill="#5e5e5e"/><rect x="0" y="74.50" width="12" height="0.7" fill="#646464"/><rect x="9" y="77.17" width="3" height="0.6" fill="#5e5e5e"/><rect x="9" y="79.83" width="3" height="0.6" fill="#5e5e5e"/><rect x="9" y="82.50" width="3" height="0.6" fill="#5e5e5e"/><rect x="7" y="85.16" width="5" height="0.6" fill="#646464"/><rect x="9" y="87.83" width="3" height="0.6" fill="#5e5e5e"/><rect x="9" y="90.50" width="3" height="0.6" fill="#5e5e5e"/><rect x="9" y="93.16" width="3" height="0.6" fill="#5e5e5e"/><rect x="0" y="95.83" width="12" height="0.7" fill="#646464"/><rect x="9" y="98.50" width="3" height="0.6" fill="#5e5e5e"/><rect x="9" y="101.16" width="3" height="0.6" fill="#5e5e5e"/><rect x="9" y="103.83" width="3" height="0.6" fill="#5e5e5e"/><rect x="7" y="106.49" width="5" height="0.6" fill="#646464"/><rect x="9" y="109.16" width="3" height="0.6" fill="#5e5e5e"/><rect x="9" y="111.83" width="3" height="0.6" fill="#5e5e5e"/><rect x="9" y="114.49" width="3" height="0.6" fill="#5e5e5e"/><rect x="0" y="117.16" width="12" height="0.7" fill="#646464"/><rect x="9" y="119.83" width="3" height="0.6" fill="#5e5e5e"/><rect x="9" y="122.49" width="3" height="0.6" fill="#5e5e5e"/><rect x="9" y="125.16" width="3" height="0.6" fill="#5e5e5e"/><rect x="7" y="127.82" width="5" height="0.6" fill="#646464"/><rect x="9" y="130.49" width="3" height="0.6" fill="#5e5e5e"/><rect x="9" y="133.16" width="3" height="0.6" fill="#5e5e5e"/><rect x="9" y="135.82" width="3" height="0.6" fill="#5e5e5e"/><rect x="0" y="138.49" width="12" height="0.7" fill="#646464"/><rect x="9" y="141.16" width="3" height="0.6" fill="#5e5e5e"/><rect x="9" y="143.82" width="3" height="0.6" fill="#5e5e5e"/><rect x="9" y="146.49" width="3" height="0.6" fill="#5e5e5e"/><rect x="7" y="149.16" width="5" height="0.6" fill="#646464"/><rect x="9" y="151.82" width="3" height="0.6" fill="#5e5e5e"/><rect x="9" y="154.49" width="3" height="0.6" fill="#5e5e5e"/><rect x="9" y="157.15" width="3" height="0.6" fill="#5e5e5e"/><rect x="0" y="159.82" width="12" height="0.7" fill="#646464"/><rect x="9" y="162.49" width="3" height="0.6" fill="#5e5e5e"/><rect x="9" y="165.15" width="3" height="0.6" fill="#5e5e5e"/><rect x="9" y="167.82" width="3" height="0.6" fill="#5e5e5e"/><rect x="7" y="170.48" width="5" height="0.6" fill="#646464"/><rect x="9" y="173.15" width="3" height="0.6" fill="#5e5e5e"/><rect x="9" y="175.82" width="3" height="0.6" fill="#5e5e5e"/><rect x="9" y="178.48" width="3" height="0.6" fill="#5e5e5e"/><rect x="0" y="181.15" width="12" height="0.7" fill="#646464"/><rect x="9" y="183.82" width="3" height="0.6" fill="#5e5e5e"/><rect x="9" y="186.48" width="3" height="0.6" fill="#5e5e5e"/><rect x="9" y="189.15" width="3" height="0.6" fill="#5e5e5e"/><rect x="7" y="191.81" width="5" height="0.6" fill="#646464"/><rect x="9" y="194.48" width="3" height="0.6" fill="#5e5e5e"/><rect x="9" y="197.15" width="3" height="0.6" fill="#5e5e5e"/><rect x="9" y="199.81" width="3" height="0.6" fill="#5e5e5e"/><rect x="0" y="202.48" width="12" height="0.7" fill="#646464"/><rect x="9" y="205.15" width="3" height="0.6" fill="#5e5e5e"/><rect x="9" y="207.81" width="3" height="0.6" fill="#5e5e5e"/><rect x="9" y="210.48" width="3" height="0.6" fill="#5e5e5e"/><rect x="7" y="213.15" width="5" height="0.6" fill="#646464"/><rect x="9" y="215.81" width="3" height="0.6" fill="#5e5e5e"/><rect x="9" y="218.48" width="3" height="0.6" fill="#5e5e5e"/><rect x="9" y="221.14" width="3" height="0.6" fill="#5e5e5e"/><rect x="0" y="223.81" width="12" height="0.7" fill="#646464"/><rect x="9" y="226.48" width="3" height="0.6" fill="#5e5e5e"/><rect x="9" y="229.14" width="3" height="0.6" fill="#5e5e5e"/><rect x="9" y="231.81" width="3" height="0.6" fill="#5e5e5e"/><rect x="7" y="234.48" width="5" height="0.6" fill="#646464"/><rect x="9" y="237.14" width="3" height="0.6" fill="#5e5e5e"/><rect x="9" y="239.81" width="3" height="0.6" fill="#5e5e5e"/><rect x="9" y="242.47" width="3" height="0.6" fill="#5e5e5e"/><rect x="0" y="245.14" width="12" height="0.7" fill="#646464"/><rect x="9" y="247.81" width="3" height="0.6" fill="#5e5e5e"/><rect x="9" y="250.47" width="3" height="0.6" fill="#5e5e5e"/><rect x="9" y="253.14" width="3" height="0.6" fill="#5e5e5e"/><rect x="7" y="255.81" width="5" height="0.6" fill="#646464"/><rect x="9" y="258.47" width="3" height="0.6" fill="#5e5e5e"/><rect x="9" y="261.14" width="3" height="0.6" fill="#5e5e5e"/><rect x="9" y="263.80" width="3" height="0.6" fill="#5e5e5e"/><rect x="0" y="266.47" width="12" height="0.7" fill="#646464"/><rect x="9" y="269.14" width="3" height="0.6" fill="#5e5e5e"/><rect x="9" y="271.80" width="3" height="0.6" fill="#5e5e5e"/><rect x="9" y="274.47" width="3" height="0.6" fill="#5e5e5e"/><rect x="7" y="277.13" width="5" height="0.6" fill="#646464"/><rect x="9" y="279.80" width="3" height="0.6" fill="#5e5e5e"/><rect x="9" y="282.47" width="3" height="0.6" fill="#5e5e5e"/><rect x="9" y="285.13" width="3" height="0.6" fill="#5e5e5e"/><rect x="0" y="287.80" width="12" height="0.7" fill="#646464"/><rect x="9" y="290.47" width="3" height="0.6" fill="#5e5e5e"/><rect x="9" y="293.13" width="3" height="0.6" fill="#5e5e5e"/><rect x="9" y="295.80" width="3" height="0.6" fill="#5e5e5e"/><rect x="7" y="298.46" width="5" height="0.6" fill="#646464"/><rect x="9" y="301.13" width="3" height="0.6" fill="#5e5e5e"/><rect x="9" y="303.80" width="3" height="0.6" fill="#5e5e5e"/><rect x="9" y="306.46" width="3" height="0.6" fill="#5e5e5e"/><rect x="0" y="309.13" width="12" height="0.7" fill="#646464"/><rect x="9" y="311.80" width="3" height="0.6" fill="#5e5e5e"/><rect x="9" y="314.46" width="3" height="0.6" fill="#5e5e5e"/><rect x="9" y="317.13" width="3" height="0.6" fill="#5e5e5e"/><rect x="7" y="319.80" width="5" height="0.6" fill="#646464"/><rect x="9" y="322.46" width="3" height="0.6" fill="#5e5e5e"/><rect x="9" y="325.13" width="3" height="0.6" fill="#5e5e5e"/><rect x="9" y="327.79" width="3" height="0.6" fill="#5e5e5e"/><rect x="0" y="330.46" width="12" height="0.7" fill="#646464"/><rect x="9" y="333.13" width="3" height="0.6" fill="#5e5e5e"/><rect x="9" y="335.79" width="3" height="0.6" fill="#5e5e5e"/><rect x="9" y="338.46" width="3" height="0.6" fill="#5e5e5e"/><rect x="7" y="341.12" width="5" height="0.6" fill="#646464"/><rect x="9" y="343.79" width="3" height="0.6" fill="#5e5e5e"/><rect x="9" y="346.46" width="3" height="0.6" fill="#5e5e5e"/><rect x="9" y="349.12" width="3" height="0.6" fill="#5e5e5e"/><rect x="0" y="351.79" width="12" height="0.7" fill="#646464"/><rect x="9" y="354.46" width="3" height="0.6" fill="#5e5e5e"/><rect x="9" y="357.12" width="3" height="0.6" fill="#5e5e5e"/><rect x="9" y="359.79" width="3" height="0.6" fill="#5e5e5e"/><rect x="7" y="362.45" width="5" height="0.6" fill="#646464"/><rect x="9" y="365.12" width="3" height="0.6" fill="#5e5e5e"/><rect x="9" y="367.79" width="3" height="0.6" fill="#5e5e5e"/><rect x="9" y="370.45" width="3" height="0.6" fill="#5e5e5e"/><rect x="0" y="373.12" width="12" height="0.7" fill="#646464"/><rect x="9" y="375.79" width="3" height="0.6" fill="#5e5e5e"/><rect x="9" y="378.45" width="3" height="0.6" fill="#5e5e5e"/><rect x="9" y="381.12" width="3" height="0.6" fill="#5e5e5e"/><rect x="7" y="383.79" width="5" height="0.6" fill="#646464"/><rect x="9" y="386.45" width="3" height="0.6" fill="#5e5e5e"/><rect x="9" y="389.12" width="3" height="0.6" fill="#5e5e5e"/><rect x="9" y="391.78" width="3" height="0.6" fill="#5e5e5e"/><rect x="0" y="394.45" width="12" height="0.7" fill="#646464"/><rect x="9" y="397.12" width="3" height="0.6" fill="#5e5e5e"/><rect x="9" y="399.78" width="3" height="0.6" fill="#5e5e5e"/><rect x="9" y="402.45" width="3" height="0.6" fill="#5e5e5e"/><rect x="7" y="405.12" width="5" height="0.6" fill="#646464"/><rect x="9" y="407.78" width="3" height="0.6" fill="#5e5e5e"/><rect x="9" y="410.45" width="3" height="0.6" fill="#5e5e5e"/><rect x="9" y="413.11" width="3" height="0.6" fill="#5e5e5e"/><rect x="0" y="415.78" width="12" height="0.7" fill="#646464"/><rect x="9" y="418.45" width="3" height="0.6" fill="#5e5e5e"/><rect x="9" y="421.11" width="3" height="0.6" fill="#5e5e5e"/><rect x="9" y="423.78" width="3" height="0.6" fill="#5e5e5e"/><rect x="7" y="426.44" width="5" height="0.6" fill="#646464"/><rect x="9" y="429.11" width="3" height="0.6" fill="#5e5e5e"/><rect x="9" y="431.78" width="3" height="0.6" fill="#5e5e5e"/><rect x="9" y="434.44" width="3" height="0.6" fill="#5e5e5e"/><rect x="0" y="437.11" width="12" height="0.7" fill="#646464"/><rect x="9" y="439.78" width="3" height="0.6" fill="#5e5e5e"/><rect x="9" y="442.44" width="3" height="0.6" fill="#5e5e5e"/><rect x="9" y="445.11" width="3" height="0.6" fill="#5e5e5e"/><rect x="7" y="447.77" width="5" height="0.6" fill="#646464"/><rect x="9" y="450.44" width="3" height="0.6" fill="#5e5e5e"/><rect x="9" y="453.11" width="3" height="0.6" fill="#5e5e5e"/><rect x="9" y="455.77" width="3" height="0.6" fill="#5e5e5e"/><rect x="0" y="458.44" width="12" height="0.7" fill="#646464"/><rect x="9" y="461.11" width="3" height="0.6" fill="#5e5e5e"/><rect x="9" y="463.77" width="3" height="0.6" fill="#5e5e5e"/><rect x="9" y="466.44" width="3" height="0.6" fill="#5e5e5e"/><rect x="7" y="469.10" width="5" height="0.6" fill="#646464"/><rect x="11.4" y="0" width="0.8" height="470" fill="#5a5a5a"/></svg>
<div class="a" style="left:25px;top:70px;width:12px;height:470px;overflow:hidden">
<div class="t" style="left:0px;top:1.28px;font-size:5.6px;color:#8c8c8c;width:7px;text-align:center;height:6px;line-height:6px">0</div>
<div class="t" style="left:0px;top:11.81px;font-size:5.6px;color:#8c8c8c;width:7px;text-align:center;height:6px;line-height:6px">3</div>
<div class="t" style="left:0px;top:17.21px;font-size:5.6px;color:#8c8c8c;width:7px;text-align:center;height:6px;line-height:6px">0</div>
<div class="t" style="left:0px;top:22.61px;font-size:5.6px;color:#8c8c8c;width:7px;text-align:center;height:6px;line-height:6px">0</div>
<div class="t" style="left:0px;top:33.14px;font-size:5.6px;color:#8c8c8c;width:7px;text-align:center;height:6px;line-height:6px">2</div>
<div class="t" style="left:0px;top:38.54px;font-size:5.6px;color:#8c8c8c;width:7px;text-align:center;height:6px;line-height:6px">0</div>
<div class="t" style="left:0px;top:43.94px;font-size:5.6px;color:#8c8c8c;width:7px;text-align:center;height:6px;line-height:6px">0</div>
<div class="t" style="left:0px;top:54.47px;font-size:5.6px;color:#8c8c8c;width:7px;text-align:center;height:6px;line-height:6px">1</div>
<div class="t" style="left:0px;top:59.87px;font-size:5.6px;color:#8c8c8c;width:7px;text-align:center;height:6px;line-height:6px">0</div>
<div class="t" style="left:0px;top:65.27px;font-size:5.6px;color:#8c8c8c;width:7px;text-align:center;height:6px;line-height:6px">0</div>
<div class="t" style="left:0px;top:75.80px;font-size:5.6px;color:#8c8c8c;width:7px;text-align:center;height:6px;line-height:6px">0</div>
<div class="t" style="left:0px;top:97.13px;font-size:5.6px;color:#8c8c8c;width:7px;text-align:center;height:6px;line-height:6px">1</div>
<div class="t" style="left:0px;top:102.53px;font-size:5.6px;color:#8c8c8c;width:7px;text-align:center;height:6px;line-height:6px">0</div>
<div class="t" style="left:0px;top:107.93px;font-size:5.6px;color:#8c8c8c;width:7px;text-align:center;height:6px;line-height:6px">0</div>
<div class="t" style="left:0px;top:118.46px;font-size:5.6px;color:#8c8c8c;width:7px;text-align:center;height:6px;line-height:6px">2</div>
<div class="t" style="left:0px;top:123.86px;font-size:5.6px;color:#8c8c8c;width:7px;text-align:center;height:6px;line-height:6px">0</div>
<div class="t" style="left:0px;top:129.26px;font-size:5.6px;color:#8c8c8c;width:7px;text-align:center;height:6px;line-height:6px">0</div>
<div class="t" style="left:0px;top:139.79px;font-size:5.6px;color:#8c8c8c;width:7px;text-align:center;height:6px;line-height:6px">3</div>
<div class="t" style="left:0px;top:145.19px;font-size:5.6px;color:#8c8c8c;width:7px;text-align:center;height:6px;line-height:6px">0</div>
<div class="t" style="left:0px;top:150.59px;font-size:5.6px;color:#8c8c8c;width:7px;text-align:center;height:6px;line-height:6px">0</div>
<div class="t" style="left:0px;top:161.12px;font-size:5.6px;color:#8c8c8c;width:7px;text-align:center;height:6px;line-height:6px">4</div>
<div class="t" style="left:0px;top:166.52px;font-size:5.6px;color:#8c8c8c;width:7px;text-align:center;height:6px;line-height:6px">0</div>
<div class="t" style="left:0px;top:171.92px;font-size:5.6px;color:#8c8c8c;width:7px;text-align:center;height:6px;line-height:6px">0</div>
<div class="t" style="left:0px;top:182.45px;font-size:5.6px;color:#8c8c8c;width:7px;text-align:center;height:6px;line-height:6px">5</div>
<div class="t" style="left:0px;top:187.85px;font-size:5.6px;color:#8c8c8c;width:7px;text-align:center;height:6px;line-height:6px">0</div>
<div class="t" style="left:0px;top:193.25px;font-size:5.6px;color:#8c8c8c;width:7px;text-align:center;height:6px;line-height:6px">0</div>
<div class="t" style="left:0px;top:203.78px;font-size:5.6px;color:#8c8c8c;width:7px;text-align:center;height:6px;line-height:6px">6</div>
<div class="t" style="left:0px;top:209.18px;font-size:5.6px;color:#8c8c8c;width:7px;text-align:center;height:6px;line-height:6px">0</div>
<div class="t" style="left:0px;top:214.58px;font-size:5.6px;color:#8c8c8c;width:7px;text-align:center;height:6px;line-height:6px">0</div>
<div class="t" style="left:0px;top:225.11px;font-size:5.6px;color:#8c8c8c;width:7px;text-align:center;height:6px;line-height:6px">7</div>
<div class="t" style="left:0px;top:230.51px;font-size:5.6px;color:#8c8c8c;width:7px;text-align:center;height:6px;line-height:6px">0</div>
<div class="t" style="left:0px;top:235.91px;font-size:5.6px;color:#8c8c8c;width:7px;text-align:center;height:6px;line-height:6px">0</div>
<div class="t" style="left:0px;top:246.44px;font-size:5.6px;color:#8c8c8c;width:7px;text-align:center;height:6px;line-height:6px">8</div>
<div class="t" style="left:0px;top:251.84px;font-size:5.6px;color:#8c8c8c;width:7px;text-align:center;height:6px;line-height:6px">0</div>
<div class="t" style="left:0px;top:257.24px;font-size:5.6px;color:#8c8c8c;width:7px;text-align:center;height:6px;line-height:6px">0</div>
<div class="t" style="left:0px;top:267.77px;font-size:5.6px;color:#8c8c8c;width:7px;text-align:center;height:6px;line-height:6px">9</div>
<div class="t" style="left:0px;top:273.17px;font-size:5.6px;color:#8c8c8c;width:7px;text-align:center;height:6px;line-height:6px">0</div>
<div class="t" style="left:0px;top:278.57px;font-size:5.6px;color:#8c8c8c;width:7px;text-align:center;height:6px;line-height:6px">0</div>
<div class="t" style="left:0px;top:289.10px;font-size:5.5px;color:#545454;width:7px;text-align:center;height:6px;line-height:6px">1</div>
<div class="t" style="left:0px;top:294.20px;font-size:5.5px;color:#545454;width:7px;text-align:center;height:6px;line-height:6px">0</div>
<div class="t" style="left:0px;top:299.30px;font-size:5.5px;color:#545454;width:7px;text-align:center;height:6px;line-height:6px">0</div>
<div class="t" style="left:0px;top:304.40px;font-size:5.5px;color:#545454;width:7px;text-align:center;height:6px;line-height:6px">0</div>
<div class="t" style="left:0px;top:310.43px;font-size:5.5px;color:#545454;width:7px;text-align:center;height:6px;line-height:6px">1</div>
<div class="t" style="left:0px;top:315.53px;font-size:5.5px;color:#545454;width:7px;text-align:center;height:6px;line-height:6px">1</div>
<div class="t" style="left:0px;top:320.63px;font-size:5.5px;color:#545454;width:7px;text-align:center;height:6px;line-height:6px">0</div>
<div class="t" style="left:0px;top:325.73px;font-size:5.5px;color:#545454;width:7px;text-align:center;height:6px;line-height:6px">0</div>
<div class="t" style="left:0px;top:331.76px;font-size:5.5px;color:#545454;width:7px;text-align:center;height:6px;line-height:6px">1</div>
<div class="t" style="left:0px;top:336.86px;font-size:5.5px;color:#545454;width:7px;text-align:center;height:6px;line-height:6px">2</div>
<div class="t" style="left:0px;top:341.96px;font-size:5.5px;color:#545454;width:7px;text-align:center;height:6px;line-height:6px">0</div>
<div class="t" style="left:0px;top:347.06px;font-size:5.5px;color:#545454;width:7px;text-align:center;height:6px;line-height:6px">0</div>
<div class="t" style="left:0px;top:353.09px;font-size:5.5px;color:#545454;width:7px;text-align:center;height:6px;line-height:6px">1</div>
<div class="t" style="left:0px;top:358.19px;font-size:5.5px;color:#545454;width:7px;text-align:center;height:6px;line-height:6px">3</div>
<div class="t" style="left:0px;top:363.29px;font-size:5.5px;color:#545454;width:7px;text-align:center;height:6px;line-height:6px">0</div>
<div class="t" style="left:0px;top:368.39px;font-size:5.5px;color:#545454;width:7px;text-align:center;height:6px;line-height:6px">0</div>
<div class="t" style="left:0px;top:374.42px;font-size:5.5px;color:#545454;width:7px;text-align:center;height:6px;line-height:6px">1</div>
<div class="t" style="left:0px;top:379.52px;font-size:5.5px;color:#545454;width:7px;text-align:center;height:6px;line-height:6px">4</div>
<div class="t" style="left:0px;top:384.62px;font-size:5.5px;color:#545454;width:7px;text-align:center;height:6px;line-height:6px">0</div>
<div class="t" style="left:0px;top:389.72px;font-size:5.5px;color:#545454;width:7px;text-align:center;height:6px;line-height:6px">0</div>
<div class="t" style="left:0px;top:395.75px;font-size:5.5px;color:#545454;width:7px;text-align:center;height:6px;line-height:6px">1</div>
<div class="t" style="left:0px;top:400.85px;font-size:5.5px;color:#545454;width:7px;text-align:center;height:6px;line-height:6px">5</div>
<div class="t" style="left:0px;top:405.95px;font-size:5.5px;color:#545454;width:7px;text-align:center;height:6px;line-height:6px">0</div>
<div class="t" style="left:0px;top:411.05px;font-size:5.5px;color:#545454;width:7px;text-align:center;height:6px;line-height:6px">0</div>
<div class="t" style="left:0px;top:417.08px;font-size:5.5px;color:#545454;width:7px;text-align:center;height:6px;line-height:6px">1</div>
<div class="t" style="left:0px;top:422.18px;font-size:5.5px;color:#545454;width:7px;text-align:center;height:6px;line-height:6px">6</div>
<div class="t" style="left:0px;top:427.28px;font-size:5.5px;color:#545454;width:7px;text-align:center;height:6px;line-height:6px">0</div>
<div class="t" style="left:0px;top:432.38px;font-size:5.5px;color:#545454;width:7px;text-align:center;height:6px;line-height:6px">0</div>
<div class="t" style="left:0px;top:438.41px;font-size:5.5px;color:#545454;width:7px;text-align:center;height:6px;line-height:6px">1</div>
<div class="t" style="left:0px;top:443.51px;font-size:5.5px;color:#545454;width:7px;text-align:center;height:6px;line-height:6px">7</div>
<div class="t" style="left:0px;top:448.61px;font-size:5.5px;color:#545454;width:7px;text-align:center;height:6px;line-height:6px">0</div>
<div class="t" style="left:0px;top:453.71px;font-size:5.5px;color:#545454;width:7px;text-align:center;height:6px;line-height:6px">0</div>
<div class="t" style="left:0px;top:459.74px;font-size:5.5px;color:#545454;width:7px;text-align:center;height:6px;line-height:6px">1</div>
<div class="t" style="left:0px;top:464.84px;font-size:5.5px;color:#545454;width:7px;text-align:center;height:6px;line-height:6px">8</div>
</div>
<div class="a" style="left:3px;top:59px;width:19px;height:15px;background:#1f1f1f;"></div>
<svg style="left:6.5px;top:60.400000000000006px;" width="12" height="12" viewBox="0 0 12 12"><path d="M6 1.5V10.5M1.5 6H10.5" stroke="#d2d2d2" stroke-width="1.2"/><path d="M6 0.3L4.3 2.4H7.7ZM6 11.7L4.3 9.6H7.7ZM0.3 6L2.4 4.3V7.7ZM11.7 6L9.6 4.3V7.7Z" fill="#d2d2d2"/></svg>
<svg style="left:19px;top:70.4px;" width="2" height="2" viewBox="0 0 2 2"><rect x="0" y="0" width="1.4" height="1.4" fill="#9a9a9a"/></svg>
<svg style="left:6.5px;top:77.07000000000001px;" width="12" height="12" viewBox="0 0 12 12"><rect x="1" y="2" width="10" height="8" fill="none" stroke="#d2d2d2" stroke-width="1.1" stroke-dasharray="1.6 1.2"/></svg>
<svg style="left:19px;top:87.07000000000001px;" width="2" height="2" viewBox="0 0 2 2"><rect x="0" y="0" width="1.4" height="1.4" fill="#9a9a9a"/></svg>
<svg style="left:6.5px;top:93.74000000000001px;" width="12" height="12" viewBox="0 0 12 12"><ellipse cx="6.5" cy="5" rx="4.6" ry="3.2" fill="none" stroke="#d2d2d2" stroke-width="1.2" transform="rotate(-15 6 5)"/><path d="M3 7.5Q2 10 4 11" fill="none" stroke="#d2d2d2" stroke-width="1.1"/></svg>
<svg style="left:19px;top:103.74000000000001px;" width="2" height="2" viewBox="0 0 2 2"><rect x="0" y="0" width="1.4" height="1.4" fill="#9a9a9a"/></svg>
<svg style="left:6.5px;top:110.41000000000001px;" width="12" height="12" viewBox="0 0 12 12"><path d="M4.5 3.5A3.2 3.2 0 1 0 5 10" fill="none" stroke="#d2d2d2" stroke-width="1.1"/><path d="M11 1L6 7L4.8 9.3L7.2 8.2L11.8 2Z" fill="#d2d2d2"/></svg>
<svg style="left:19px;top:120.41000000000001px;" width="2" height="2" viewBox="0 0 2 2"><rect x="0" y="0" width="1.4" height="1.4" fill="#9a9a9a"/></svg>
<svg style="left:6.5px;top:127.08000000000001px;" width="12" height="12" viewBox="0 0 12 12"><path d="M11 1L3 9L2 11L4.5 10L11.5 2.5Z" fill="#d2d2d2"/><path d="M1 6L5 6" stroke="#d2d2d2" stroke-width="0.8"/></svg>
<svg style="left:19px;top:137.08px;" width="2" height="2" viewBox="0 0 2 2"><rect x="0" y="0" width="1.4" height="1.4" fill="#9a9a9a"/></svg>
<svg style="left:6.5px;top:143.75px;" width="12" height="12" viewBox="0 0 12 12"><rect x="1.2" y="1.2" width="9.6" height="9.6" fill="none" stroke="#d2d2d2" stroke-width="1.1"/><path d="M1.2 1.2L10.8 10.8M10.8 1.2L1.2 10.8" stroke="#d2d2d2" stroke-width="1.1"/></svg>
<svg style="left:6.5px;top:160.42000000000002px;" width="12" height="12" viewBox="0 0 12 12"><path d="M9 1.5L10.5 3L7 6.5L5.5 5Z" fill="#d2d2d2"/><path d="M6.3 5.8L2 10.2" stroke="#d2d2d2" stroke-width="1.6"/></svg>
<svg style="left:19px;top:170.42000000000002px;" width="2" height="2" viewBox="0 0 2 2"><rect x="0" y="0" width="1.4" height="1.4" fill="#9a9a9a"/></svg>
<svg style="left:6.5px;top:177.09000000000003px;" width="12" height="12" viewBox="0 0 12 12"><rect x="3.5" y="1" width="5" height="10.5" rx="2.4" fill="#d2d2d2" transform="rotate(45 6 6.2)"/><circle cx="6" cy="6" r="0.7" fill="#2e2e2e"/><circle cx="7.3" cy="4.8" r="0.6" fill="#2e2e2e"/><circle cx="4.8" cy="7.3" r="0.6" fill="#2e2e2e"/></svg>
<svg style="left:19px;top:187.09000000000003px;" width="2" height="2" viewBox="0 0 2 2"><rect x="0" y="0" width="1.4" height="1.4" fill="#9a9a9a"/></svg>
<svg style="left:6.5px;top:193.76000000000002px;" width="12" height="12" viewBox="0 0 12 12"><path d="M11.3 0.7L6 6.3L7.7 7.8L11.8 1.3Z" fill="#d2d2d2"/><path d="M5.6 6.8Q3 7 2.6 9.3Q2.3 11 0.8 11.3Q4.5 12 6.8 9.5Q7.5 8.5 7.2 8.2Z" fill="#d2d2d2"/></svg>
<svg style="left:19px;top:203.76000000000002px;" width="2" height="2" viewBox="0 0 2 2"><rect x="0" y="0" width="1.4" height="1.4" fill="#9a9a9a"/></svg>
<svg style="left:6.5px;top:210.43000000000004px;" width="12" height="12" viewBox="0 0 12 12"><circle cx="6.5" cy="3" r="2" fill="#d2d2d2"/><rect x="5.7" y="4" width="1.6" height="3" fill="#d2d2d2"/><rect x="2.5" y="7" width="8" height="2.4" fill="#d2d2d2"/><rect x="3" y="10" width="7" height="1.2" fill="#d2d2d2"/><path d="M0 0L2.5 2.5M2.5 0L0 2.5" stroke="#d2d2d2" stroke-width="0.9"/></svg>
<svg style="left:19px;top:220.43000000000004px;" width="2" height="2" viewBox="0 0 2 2"><rect x="0" y="0" width="1.4" height="1.4" fill="#9a9a9a"/></svg>
<svg style="left:6.5px;top:227.10000000000002px;" width="12" height="12" viewBox="0 0 12 12"><path d="M4 9Q0 6 2.5 3Q5 0.5 8 2" fill="none" stroke="#d2d2d2" stroke-width="1.1"/><path d="M11.3 1.5L6 7L7.3 8.3L11.8 2.2Z" fill="#d2d2d2"/><path d="M5.6 7.5Q3.5 8.5 3.2 11Q6 11 7 8.8Z" fill="#d2d2d2"/></svg>
<svg style="left:19px;top:237.10000000000002px;" width="2" height="2" viewBox="0 0 2 2"><rect x="0" y="0" width="1.4" height="1.4" fill="#9a9a9a"/></svg>
<svg style="left:6.5px;top:243.77px;" width="12" height="12" viewBox="0 0 12 12"><path d="M7.5 1.5L11 5L5 11L1.5 7.5Z" fill="#d2d2d2"/><path d="M4 5L7.2 8.2" stroke="#2e2e2e" stroke-width="0.8"/><circle cx="2" cy="2.5" r="0.8" fill="#d2d2d2"/><circle cx="4" cy="1" r="0.6" fill="#d2d2d2"/></svg>
<svg style="left:19px;top:253.77px;" width="2" height="2" viewBox="0 0 2 2"><rect x="0" y="0" width="1.4" height="1.4" fill="#9a9a9a"/></svg>
<svg style="left:6.5px;top:260.44000000000005px;" width="12" height="12" viewBox="0 0 12 12"><path d="M5 1L10 6L5.5 10.5L0.8 5.8Z" fill="none" stroke="#d2d2d2" stroke-width="1.2"/><path d="M1.5 6L9 6.3L5.5 10Z" fill="#d2d2d2"/><path d="M10.5 7Q12 9.5 10.8 10.5Q9.5 9.5 10.5 7Z" fill="#d2d2d2"/></svg>
<svg style="left:19px;top:270.44000000000005px;" width="2" height="2" viewBox="0 0 2 2"><rect x="0" y="0" width="1.4" height="1.4" fill="#9a9a9a"/></svg>
<svg style="left:6.5px;top:277.11px;" width="12" height="12" viewBox="0 0 12 12"><path d="M10.5 1.2Q3.5 1.5 3 6.5L1.5 10.8L5.5 9Q10.5 8.5 10.5 1.2Z" fill="#d2d2d2"/></svg>
<svg style="left:19px;top:287.11px;" width="2" height="2" viewBox="0 0 2 2"><rect x="0" y="0" width="1.4" height="1.4" fill="#9a9a9a"/></svg>
<svg style="left:6.5px;top:293.78000000000003px;" width="12" height="12" viewBox="0 0 12 12"><circle cx="6.5" cy="4.5" r="3.5" fill="#d2d2d2"/><path d="M4.3 7L1.2 11" stroke="#d2d2d2" stroke-width="1.5"/></svg>
<svg style="left:19px;top:303.78000000000003px;" width="2" height="2" viewBox="0 0 2 2"><rect x="0" y="0" width="1.4" height="1.4" fill="#9a9a9a"/></svg>
<svg style="left:6.5px;top:310.45000000000005px;" width="12" height="12" viewBox="0 0 12 12"><path d="M6.5 0.5L11 5L7 11.5L1.5 9L1 3.5Z" fill="none" stroke="#d2d2d2" stroke-width="1.1"/><circle cx="5.5" cy="6" r="1.2" fill="#d2d2d2"/></svg>
<svg style="left:19px;top:320.45000000000005px;" width="2" height="2" viewBox="0 0 2 2"><rect x="0" y="0" width="1.4" height="1.4" fill="#9a9a9a"/></svg>
<svg style="left:6.5px;top:327.12px;" width="12" height="12" viewBox="0 0 12 12"><path d="M1.5 1.2H10.5V3.5M1.5 1.2V3.5M6 1.2V11M4 11H8" fill="none" stroke="#d2d2d2" stroke-width="1.4"/></svg>
<svg style="left:19px;top:337.12px;" width="2" height="2" viewBox="0 0 2 2"><rect x="0" y="0" width="1.4" height="1.4" fill="#9a9a9a"/></svg>
<svg style="left:6.5px;top:343.7900000000001px;" width="12" height="12" viewBox="0 0 12 12"><path d="M3 0.5V11L5.5 8.3L7.8 11.5L9.2 10.7L7 7.5H10.5Z" fill="#d2d2d2"/></svg>
<svg style="left:19px;top:353.7900000000001px;" width="2" height="2" viewBox="0 0 2 2"><rect x="0" y="0" width="1.4" height="1.4" fill="#9a9a9a"/></svg>
<svg style="left:6.5px;top:360.46000000000004px;" width="12" height="12" viewBox="0 0 12 12"><path d="M3.2 1.3H8.8L11.5 6L8.8 10.7H3.2L0.5 6Z" fill="none" stroke="#d2d2d2" stroke-width="1.3"/></svg>
<svg style="left:19px;top:370.46000000000004px;" width="2" height="2" viewBox="0 0 2 2"><rect x="0" y="0" width="1.4" height="1.4" fill="#9a9a9a"/></svg>
<svg style="left:6.5px;top:377.13px;" width="12" height="12" viewBox="0 0 12 12"><path d="M2.5 6.5V3Q3.5 2 4 3V6V1.5Q5 0.5 5.8 1.5V6V1Q6.8 0 7.5 1V6V2Q8.5 1.2 9.3 2V7.5Q9 11.5 5.5 11.5Q3 11.5 1 8Q0.5 6.5 2.5 6.5Z" fill="#d2d2d2"/></svg>
<svg style="left:19px;top:387.13px;" width="2" height="2" viewBox="0 0 2 2"><rect x="0" y="0" width="1.4" height="1.4" fill="#9a9a9a"/></svg>
<svg style="left:6.5px;top:393.80000000000007px;" width="12" height="12" viewBox="0 0 12 12"><circle cx="5" cy="4.8" r="3.5" fill="none" stroke="#d2d2d2" stroke-width="1.4"/><path d="M7.5 7.4L11 11" stroke="#d2d2d2" stroke-width="1.7"/></svg>
<svg style="left:19px;top:403.80000000000007px;" width="2" height="2" viewBox="0 0 2 2"><rect x="0" y="0" width="1.4" height="1.4" fill="#9a9a9a"/></svg>
<svg style="left:6.5px;top:410.47px;" width="12" height="12" viewBox="0 0 12 12"><circle cx="2" cy="6" r="1.3" fill="#d2d2d2"/><circle cx="6" cy="6" r="1.3" fill="#d2d2d2"/><circle cx="10" cy="6" r="1.3" fill="#d2d2d2"/></svg>
<svg style="left:19px;top:420.47px;" width="2" height="2" viewBox="0 0 2 2"><rect x="0" y="0" width="1.4" height="1.4" fill="#9a9a9a"/></svg>
<svg style="left:3px;top:428px;" width="7" height="7" viewBox="0 0 7 7"><rect x="2.5" y="2.5" width="4" height="4" fill="#eee"/><rect x="0.5" y="0.5" width="4" height="4" fill="#000" stroke="#eee" stroke-width="0.8"/></svg>
<svg style="left:14px;top:428px;" width="7" height="7" viewBox="0 0 7 7"><path d="M1 1.5H5V6" fill="none" stroke="#ddd" stroke-width="1"/><path d="M0 1.5L2 0M0 1.5L2 3M5 6L3.5 4M5 6L6.5 4" stroke="#ddd" stroke-width="0.8"/></svg>
<div class="a" style="left:9.5px;top:445px;width:12px;height:11.5px;background:#f4f4f4;border:1px solid #2e2e2e"></div>
<div class="a" style="left:3px;top:438.5px;width:12px;height:12px;background:#fafafa;border:1px solid #2e2e2e"></div>
<svg style="left:7px;top:464px;" width="12" height="9" viewBox="0 0 12 9"><rect x="0.6" y="0.6" width="10.8" height="7.8" fill="none" stroke="#c8c8c8" stroke-width="1.1"/><circle cx="6" cy="4.5" r="2.2" fill="none" stroke="#c8c8c8" stroke-width="1"/></svg>
<svg style="left:7px;top:480px;" width="12" height="9" viewBox="0 0 12 9"><rect x="3.5" y="0.6" width="8" height="6" fill="none" stroke="#c8c8c8" stroke-width="1.1"/><rect x="0.6" y="2.6" width="8" height="6" fill="#2e2e2e" stroke="#c8c8c8" stroke-width="1.1"/></svg>
<svg style="left:19px;top:491px;" width="2" height="2" viewBox="0 0 2 2"><rect x="0" y="0" width="1.4" height="1.4" fill="#9a9a9a"/></svg>
<svg style="left:0px;top:0px;pointer-events:none" width="1024" height="576" viewBox="0 0 1024 576"><defs>
<pattern id="pp" patternUnits="userSpaceOnUse" width="14" height="13.5" patternTransform="translate(5.4 -1.5)">
<rect width="14" height="13.5" fill="#8046c6"/>
<path d="M-3 -3L17 16.5M-10 4L4 17.5M10 -4L24 9.5" stroke="#7339bb" stroke-width="3" fill="none"/>
<ellipse cx="9" cy="5" rx="4.5" ry="4" fill="#925acf"/>
</pattern>
<filter id="bl" x="-5%" y="-5%" width="110%" height="110%"><feGaussianBlur stdDeviation="1.2"/></filter>
<filter id="gl" x="-10%" y="-10%" width="120%" height="120%"><feGaussianBlur stdDeviation="1.5"/></filter>
</defs><polygon points="315.6,148.8 396.4,204.6 368.6,299.2 268.7,301.5 236.2,208.2" fill="none" stroke="#fff6a8" stroke-width="8" stroke-linejoin="miter" filter="url(#gl)" opacity="0.75"/><polygon points="315.6,148.8 396.4,204.6 368.6,299.2 268.7,301.5 236.2,208.2" fill="none" stroke="#f4e552" stroke-width="5.6" stroke-linejoin="miter"/><g filter="url(#bl)"><polygon points="315.6,148.8 396.4,204.6 368.6,299.2 268.7,301.5 236.2,208.2" fill="url(#pp)"/></g><polygon points="315.6,148.8 396.4,204.6 368.6,299.2 268.7,301.5 236.2,208.2" fill="none" stroke="#6a3a6a" stroke-width="0.9" stroke-linejoin="miter" opacity="0.8"/><polygon points="571.9,340.4 610.4,389.4 572.9,438.3 510.4,421.7 510.4,357.1" fill="none" stroke="#fff6a8" stroke-width="8" stroke-linejoin="miter" filter="url(#gl)" opacity="0.75"/><polygon points="571.9,340.4 610.4,389.4 572.9,438.3 510.4,421.7 510.4,357.1" fill="none" stroke="#f4e552" stroke-width="5.6" stroke-linejoin="miter"/><g filter="url(#bl)"><polygon points="571.9,340.4 610.4,389.4 572.9,438.3 510.4,421.7 510.4,357.1" fill="url(#pp)"/></g><polygon points="571.9,340.4 610.4,389.4 572.9,438.3 510.4,421.7 510.4,357.1" fill="none" stroke="#6a3a6a" stroke-width="0.9" stroke-linejoin="miter" opacity="0.8"/></svg>
<svg style="left:579.5px;top:357.5px;" width="14" height="14" viewBox="0 0 14 14"><path d="M0.5 0.5L7.5 6.5L4.3 6.8L6.2 10.3L5 11L3.2 7.5L0.8 9.5Z" fill="#111" stroke="#eee" stroke-width="0.5"/><path d="M10 7V12.5M7.3 9.7H12.7" stroke="#222" stroke-width="0.8"/><rect x="8.3" y="8" width="3.4" height="3.4" fill="none" stroke="#222" stroke-width="0.7"/></svg>
<div class="a" style="left:845px;top:48px;width:24px;height:25px;background:#2e2e2e;"></div>
<div class="a" style="left:845px;top:75px;width:24px;height:42px;background:#2e2e2e;"></div>
<div class="a" style="left:845px;top:120px;width:24px;height:42px;background:#2e2e2e;"></div>
<div class="a" style="left:845px;top:164px;width:24px;height:41px;background:#2e2e2e;"></div>
<div class="a" style="left:845px;top:207px;width:24px;height:46px;background:#2e2e2e;"></div>
<div class="a" style="left:845px;top:73.5px;width:24px;height:2px;background:#242424;"></div>
<div class="a" style="left:845px;top:117.5px;width:24px;height:2px;background:#242424;"></div>
<div class="a" style="left:845px;top:162.5px;width:24px;height:2px;background:#242424;"></div>
<div class="a" style="left:845px;top:205.5px;width:24px;height:2px;background:#242424;"></div>
<div class="a" style="left:845px;top:252.5px;width:24px;height:2px;background:#242424;"></div>
<svg style="left:851.5px;top:56.5px;" width="12" height="12" viewBox="0 0 12 12"><rect x="1.5" y="0.5" width="3" height="3" fill="#d0d0d0"/><rect x="1.5" y="4.5" width="3" height="3" fill="#d0d0d0"/><rect x="1.5" y="8.5" width="3" height="3" fill="#d0d0d0"/><path d="M7.3 2.2Q10.8 3.5 10.2 7Q9.7 9.5 7.5 11" fill="none" stroke="#d0d0d0" stroke-width="1.3"/><path d="M6 0.8L8.8 1.8L6.8 4Z" fill="#d0d0d0"/></svg>
<svg style="left:851.5px;top:82.7px;" width="12" height="12" viewBox="0 0 12 12"><path d="M3.5 1L6.5 2.5V6L3.5 7.5L0.5 6V2.5Z" fill="none" stroke="#d0d0d0" stroke-width="1"/><path d="M0.5 2.5L3.5 4L6.5 2.5M3.5 4V7.5" fill="none" stroke="#d0d0d0" stroke-width="0.7"/><rect x="8" y="1.5" width="3.2" height="2.5" fill="#d0d0d0"/><rect x="8" y="5" width="3.2" height="2.5" fill="#d0d0d0"/><rect x="0.5" y="9" width="10.7" height="2" fill="#d0d0d0"/></svg>
<svg style="left:851.5px;top:101px;" width="12" height="12" viewBox="0 0 12 12"><circle cx="6" cy="6" r="5" fill="none" stroke="#d0d0d0" stroke-width="1.2"/><rect x="5.3" y="5" width="1.4" height="4" fill="#d0d0d0"/><rect x="5.3" y="2.8" width="1.4" height="1.3" fill="#d0d0d0"/></svg>
<svg style="left:851.5px;top:128.5px;" width="12" height="12" viewBox="0 0 12 12"><path d="M0.5 1H4M0.5 3H4M0.5 5H4M0.5 7H3" stroke="#d0d0d0" stroke-width="0.8"/><path d="M11.5 1.5L6.5 7L8 8.3L12 2.3Z" fill="#d0d0d0"/><path d="M6 7.5Q3.5 8 3.3 11.3Q6.5 11.5 7.5 8.8Z" fill="#d0d0d0"/></svg>
<svg style="left:851.5px;top:145.5px;" width="12" height="12" viewBox="0 0 12 12"><rect x="1" y="2" width="11" height="1.3" fill="#d0d0d0"/><circle cx="3" cy="2.7" r="1.7" fill="#d0d0d0"/><rect x="1" y="7" width="11" height="1.3" fill="#d0d0d0"/><circle cx="8.5" cy="7.7" r="2.6" fill="#d0d0d0"/><path d="M2 11H6" stroke="#d0d0d0"/></svg>
<div class="t" style="left:851px;top:171px;font-size:11px;color:#d0d0d0;line-height:11px">A</div>
<div class="a" style="left:859.5px;top:172px;width:1px;height:10px;background:#d0d0d0;"></div>
<div class="t" style="left:852px;top:188px;font-size:11px;font-weight:bold;color:#d0d0d0;line-height:11px">&#182;</div>
<svg style="left:851.5px;top:215.8px;" width="12" height="12" viewBox="0 0 12 12"><rect x="1" y="1" width="10" height="10" fill="#d0d0d0"/><rect x="2.3" y="2.3" width="3.2" height="3.2" fill="#2e2e2e"/><rect x="6.5" y="2.3" width="3.2" height="3.2" fill="#2e2e2e"/><rect x="2.3" y="6.8" width="7.4" height="1" fill="#2e2e2e"/></svg>
<svg style="left:851.5px;top:234px;" width="12" height="12" viewBox="0 0 12 12"><path d="M1 1H11V8L8 11H1Z" fill="#d0d0d0"/><path d="M2.5 3.5H9.5M2.5 5.5H9.5M2.5 7.5H7" stroke="#2e2e2e" stroke-width="0.8"/><path d="M8 11V8H11" fill="#aaa"/></svg>
<div class="a" style="left:869px;top:48px;width:2px;height:502px;background:#242424;"></div>
<div class="a" style="left:871px;top:48px;width:153px;height:17px;background:#262626;"></div>
<div class="a" style="left:872px;top:48px;width:27px;height:17px;background:#2f2f2f;"></div>
<div class="t" style="left:877.00px;top:53.15px;font-size:7.5px;color:#e6e6e6;font-weight:bold;transform:scaleX(0.766);">Color</div>
<div class="t" style="left:905.50px;top:53.15px;font-size:7.5px;color:#7c7c7c;transform:scaleX(0.846);">Swatches</div>
<svg style="left:1013px;top:53px;" width="7" height="6" viewBox="0 0 7 6"><path d="M0 0.8H7M0 3H7M0 5.2H7" stroke="#8a8a8a" stroke-width="1.1"/></svg>
<div class="a" style="left:871px;top:65px;width:153px;height:185.5px;background:#2f2f2f;"></div>
<div class="a" style="left:882px;top:78px;width:12px;height:12px;background:#ffffff;border:1px solid #313131;box-sizing:content-box;left:882px;top:78px"></div>
<div class="a" style="left:876px;top:71px;width:12px;height:12px;background:#fdfdfd;border:1px solid #313131;box-sizing:content-box;left:876.5px;top:71.5px"></div>
<div class="a" style="left:899.5px;top:69.7px;width:91.3px;height:170.2px;background:linear-gradient(to bottom,rgba(0,0,0,0),#000),linear-gradient(to right,#fff,#f00)"></div>
<svg style="left:898px;top:68px;" width="5" height="5" viewBox="0 0 5 5"><circle cx="2.5" cy="2.5" r="1.8" fill="none" stroke="#fff" stroke-width="0.9"/></svg>
<div class="a" style="left:1000px;top:68.7px;width:15px;height:172.8px;background:#222;"></div>
<div class="a" style="left:1001px;top:69.7px;width:13px;height:170.8px;background:linear-gradient(to bottom,#f00 0%,#f0f 16.7%,#00f 33.3%,#0ff 50%,#0f0 66.7%,#ff0 83.3%,#f00 100%)"></div>
<svg style="left:995.5px;top:237.5px;" width="5" height="6" viewBox="0 0 5 6"><path d="M0 0L4.5 3L0 6Z" fill="#e8e8e8"/></svg>
<div class="a" style="left:871px;top:250.5px;width:153px;height:5.5px;background:#262626;"></div>
<div class="a" style="left:871px;top:256px;width:153px;height:17.5px;background:#262626;"></div>
<div class="a" style="left:873px;top:256.5px;width:34.7px;height:17px;background:#2a2a2a;"></div>
<div class="a" style="left:909.4px;top:256px;width:49.6px;height:17.5px;background:#2f2f2f;"></div>
<div class="t" style="left:876.80px;top:261.15px;font-size:7.5px;color:#8a8a8a;transform:scaleX(0.869);">Libraries</div>
<div class="t" style="left:915.50px;top:261.15px;font-size:7.5px;color:#e6e6e6;font-weight:bold;transform:scaleX(0.804);">Adjustments</div>
<svg style="left:1013px;top:262px;" width="7" height="6" viewBox="0 0 7 6"><path d="M0 0.8H7M0 3H7M0 5.2H7" stroke="#8a8a8a" stroke-width="1.1"/></svg>
<div class="a" style="left:871px;top:273.5px;width:153px;height:64.5px;background:#2f2f2f;"></div>
<div class="t" style="left:876.80px;top:277.91px;font-size:7.2px;color:#bdbdbd;transform:scaleX(0.903);">Add an adjustment</div>
<svg style="left:900px;top:287.5px;" width="12" height="12" viewBox="0 0 12 12"><circle cx="6" cy="6" r="3" fill="none" stroke="#d6d6d6" stroke-width="1"/><path d="M6 3A3 3 0 0 1 6 9Z" fill="#d6d6d6"/><path d="M6 0V1.8M6 10.2V12M0 6H1.8M10.2 6H12M1.8 1.8L3 3M9 9L10.2 10.2M10.2 1.8L9 3M3 9L1.8 10.2" stroke="#d6d6d6" stroke-width="0.9"/></svg>
<svg style="left:915px;top:287.5px;" width="12" height="12" viewBox="0 0 12 12"><path d="M0.5 10.5V8L2 5L3 7L4.5 3L6 6L7 2L8.5 5L10 3.5L11.5 6V10.5Z" fill="#d6d6d6"/></svg>
<svg style="left:930.8px;top:287.5px;" width="12" height="12" viewBox="0 0 12 12"><rect x="1" y="1" width="10" height="10" fill="none" stroke="#d6d6d6" stroke-width="0.9"/><path d="M1 4.3H11M1 7.6H11M4.3 1V11M7.6 1V11" stroke="#d6d6d6" stroke-width="0.5"/><path d="M1 11Q6 9 11 1" fill="none" stroke="#d6d6d6" stroke-width="1"/></svg>
<svg style="left:946.3px;top:287.5px;" width="12" height="12" viewBox="0 0 12 12"><rect x="0.5" y="1.5" width="11" height="9" fill="#d6d6d6"/><path d="M0.5 10.5L11.5 1.5V10.5Z" fill="#555"/><path d="M2 5H5M8 7.5H11" stroke="#313131" stroke-width="0.9"/></svg>
<svg style="left:961.2px;top:287.5px;" width="12" height="12" viewBox="0 0 12 12"><path d="M1 1.5H11L6 10.5Z" fill="none" stroke="#d6d6d6" stroke-width="1.2"/></svg>
<svg style="left:892px;top:304px;" width="12" height="12" viewBox="0 0 12 12"><rect x="0.5" y="1.5" width="11" height="9" fill="#d6d6d6"/><path d="M0.5 4.5H11.5M0.5 7.5H11.5M4 1.5V10.5M8 1.5V10.5" stroke="#313131" stroke-width="0.7"/><rect x="0.5" y="7.5" width="11" height="3" fill="#8a8a8a"/></svg>
<svg style="left:907.4px;top:304px;" width="12" height="12" viewBox="0 0 12 12"><path d="M6 1V10M2 3H10M1 7L2.5 3.5L4 7ZM8 7L9.5 3.5L11 7Z" fill="none" stroke="#d6d6d6" stroke-width="0.9"/><path d="M0.5 7H4.5Q4 9 2.5 9Q1 9 0.5 7ZM7.5 7H11.5Q11 9 9.5 9Q8 9 7.5 7Z" fill="#d6d6d6"/><path d="M3 11H9" stroke="#d6d6d6"/></svg>
<svg style="left:923px;top:304px;" width="12" height="12" viewBox="0 0 12 12"><rect x="1" y="1" width="10" height="10" fill="#d6d6d6"/><rect x="2" y="2" width="4" height="8" fill="#313131"/></svg>
<svg style="left:938px;top:304px;" width="12" height="12" viewBox="0 0 12 12"><path d="M1 4H3.5L4.5 2.5H8L9 4H11V10H1Z" fill="#d6d6d6"/><circle cx="6" cy="7" r="2" fill="#313131"/><circle cx="9.5" cy="9.5" r="2.2" fill="#313131" stroke="#d6d6d6" stroke-width="0.9"/></svg>
<svg style="left:953.4px;top:304px;" width="12" height="12" viewBox="0 0 12 12"><circle cx="6" cy="4.3" r="3.3" fill="#d6d6d6"/><circle cx="4" cy="7.7" r="3.3" fill="#bbb"/><circle cx="8" cy="7.7" r="3.3" fill="#999"/></svg>
<svg style="left:969px;top:304px;" width="12" height="12" viewBox="0 0 12 12"><rect x="0.5" y="1" width="11" height="10" fill="#d6d6d6"/><path d="M0.5 3.5H11.5M0.5 6H11.5M0.5 8.5H11.5M3.3 1V11M6 1V11M8.7 1V11" stroke="#313131" stroke-width="0.7"/></svg>
<svg style="left:900px;top:321.3px;" width="12" height="12" viewBox="0 0 12 12"><rect x="0.5" y="1" width="11" height="10" fill="#d6d6d6"/><rect x="2" y="2.5" width="8" height="7" fill="#313131"/><path d="M2.5 9Q4 3 9.5 3Q6 5 2.5 9Z" fill="#d6d6d6"/></svg>
<svg style="left:915px;top:321.3px;" width="12" height="12" viewBox="0 0 12 12"><rect x="0.5" y="1" width="11" height="10" fill="#7a7a7a"/><path d="M0.5 11L11.5 1V4L3.5 11Z" fill="#d6d6d6"/></svg>
<svg style="left:930.8px;top:321.3px;" width="12" height="12" viewBox="0 0 12 12"><rect x="0.5" y="1" width="11" height="10" fill="#d6d6d6"/><path d="M0.5 8L11.5 3V5.5L0.5 10.5Z" fill="#313131"/></svg>
<svg style="left:946.3px;top:321.3px;" width="12" height="12" viewBox="0 0 12 12"><rect x="0.5" y="1" width="11" height="10" fill="#d6d6d6"/><path d="M0.5 1L6 6L0.5 11ZM11.5 1L6 6L11.5 11Z" fill="#7a7a7a"/></svg>
<div class="a" style="left:961.7px;top:322.3px;width:11px;height:10px;background:linear-gradient(to right,#444,#e0e0e0);border:1px solid #d6d6d6"></div>
<div class="a" style="left:871px;top:338px;width:153px;height:3px;background:#262626;"></div>
<div class="a" style="left:871px;top:341px;width:153px;height:17.3px;background:#262626;"></div>
<div class="a" style="left:872px;top:341px;width:29.6px;height:17.3px;background:#2f2f2f;"></div>
<div class="t" style="left:876.80px;top:346.15px;font-size:7.5px;color:#e6e6e6;font-weight:bold;transform:scaleX(0.753);">Layers</div>
<div class="t" style="left:907.30px;top:346.15px;font-size:7.5px;color:#8a8a8a;transform:scaleX(0.833);">Channels</div>
<div class="t" style="left:946.70px;top:346.15px;font-size:7.5px;color:#8a8a8a;transform:scaleX(0.886);">Paths</div>
<svg style="left:1013px;top:346px;" width="7" height="6" viewBox="0 0 7 6"><path d="M0 0.8H7M0 3H7M0 5.2H7" stroke="#8a8a8a" stroke-width="1.1"/></svg>
<div class="a" style="left:871px;top:358.3px;width:153px;height:175px;background:#2f2f2f;"></div>
<div class="a" style="left:871px;top:415.5px;width:153px;height:117.5px;background:#2b2b2b;"></div>
<div class="a" style="left:1013.5px;top:415.5px;width:10.5px;height:117.5px;background:#272727;"></div>
<div class="a" style="left:873.8px;top:365px;width:53.8px;height:11px;background:#252525;"></div>
<svg style="left:877.5px;top:367px;" width="7" height="7" viewBox="0 0 7 7"><circle cx="2.8" cy="2.8" r="2.1" fill="none" stroke="#ddd" stroke-width="1.1"/><path d="M4.3 4.3L6.5 6.5" stroke="#ddd" stroke-width="1.3"/></svg>
<div class="t" style="left:887.70px;top:366.87px;font-size:7px;color:#d0d0d0;transform:scaleX(0.871);">Kind</div>
<svg style="left:921px;top:369px;" width="5" height="3" viewBox="0 0 5 3"><path d="M0.3 0.3L2.5 2.5L4.7 0.3" fill="none" stroke="#999" stroke-width="0.9"/></svg>
<svg style="left:935px;top:366px;" width="9" height="8" viewBox="0 0 9 8"><rect x="0.5" y="0.5" width="8" height="7" fill="none" stroke="#d6d6d6" stroke-width="0.9"/><path d="M1.5 6.5L3.5 4L5 5.5L6 4.5L7.5 6.5Z" fill="#d6d6d6"/></svg>
<svg style="left:951px;top:366px;" width="9" height="9" viewBox="0 0 9 9"><circle cx="4.5" cy="4.5" r="3.8" fill="#d6d6d6"/><path d="M1.8 7.2L7.2 1.8A3.8 3.8 0 0 1 1.8 7.2Z" fill="#555"/></svg>
<svg style="left:967px;top:365.5px;" width="9" height="9" viewBox="0 0 9 9"><path d="M0.8 2.2V0.8H8.2V2.2M4.5 0.8V8.2M2.8 8.2H6.2" fill="none" stroke="#d6d6d6" stroke-width="1.2"/></svg>
<svg style="left:982px;top:365.5px;" width="9" height="9" viewBox="0 0 9 9"><rect x="1.5" y="1.5" width="6" height="6" fill="none" stroke="#d6d6d6" stroke-width="1"/><rect x="0" y="0" width="2.5" height="2.5" fill="#d6d6d6"/><rect x="6.5" y="0" width="2.5" height="2.5" fill="#d6d6d6"/><rect x="0" y="6.5" width="2.5" height="2.5" fill="#d6d6d6"/><rect x="6.5" y="6.5" width="2.5" height="2.5" fill="#d6d6d6"/></svg>
<svg style="left:997.5px;top:365.5px;" width="9" height="9" viewBox="0 0 9 9"><path d="M1 3.5L4 1L8 4.5V8.5H1Z" fill="#d6d6d6"/><circle cx="6" cy="6" r="2" fill="#313131"/></svg>
<svg style="left:1013px;top:362px;" width="7" height="13" viewBox="0 0 7 13"><rect x="1" y="4" width="5" height="9" rx="2.5" fill="#222"/><circle cx="3.5" cy="4" r="3" fill="#e8e8e8"/></svg>
<div class="a" style="left:874.3px;top:383.5px;width:80.2px;height:10.4px;background:#252525;"></div>
<div class="t" style="left:878.50px;top:384.87px;font-size:7px;color:#d0d0d0;transform:scaleX(0.909);">Normal</div>
<svg style="left:948.5px;top:387px;" width="5" height="3" viewBox="0 0 5 3"><path d="M0.3 0.3L2.5 2.5L4.7 0.3" fill="none" stroke="#999" stroke-width="0.9"/></svg>
<div class="t" style="left:959.80px;top:384.87px;font-size:7px;color:#8a8a8a;transform:scaleX(0.911);">Opacity:</div>
<div class="a" style="left:986.7px;top:383.5px;width:31.2px;height:10.4px;background:#252525;"></div>
<div class="t" style="left:989.00px;top:384.87px;font-size:7px;color:#d0d0d0;transform:scaleX(0.894);">100%</div>
<div class="a" style="left:1008.5px;top:384.5px;width:0.8px;height:8.4px;background:#313131;"></div>
<svg style="left:1011.5px;top:387.5px;" width="5" height="3" viewBox="0 0 5 3"><path d="M0.3 0.3L2.5 2.5L4.7 0.3" fill="none" stroke="#999" stroke-width="0.9"/></svg>
<div class="t" style="left:874.70px;top:403.07px;font-size:7px;color:#8a8a8a;transform:scaleX(0.879);">Lock:</div>
<svg style="left:895.5px;top:401.5px;" width="8" height="8" viewBox="0 0 8 8"><rect x="0.5" y="0.5" width="7" height="7" fill="none" stroke="#999" stroke-width="0.8"/><rect x="0.5" y="0.5" width="3.5" height="3.5" fill="#999"/><rect x="4" y="4" width="3.5" height="3.5" fill="#999"/></svg>
<svg style="left:909px;top:401px;" width="9" height="9" viewBox="0 0 9 9"><path d="M8.5 0.5L3.5 5.5L4.5 6.5Z" fill="#888"/><path d="M3 6Q1 6.5 0.5 8.8Q3 8.5 4 7Z" fill="#888"/></svg>
<svg style="left:922.5px;top:400.5px;" width="10" height="10" viewBox="0 0 10 10"><path d="M5 1V9M1 5H9" stroke="#d6d6d6" stroke-width="1"/><path d="M5 0L3.5 2H6.5ZM5 10L3.5 8H6.5ZM0 5L2 3.5V6.5ZM10 5L8 3.5V6.5Z" fill="#d6d6d6"/></svg>
<svg style="left:937px;top:400.5px;" width="10" height="10" viewBox="0 0 10 10"><path d="M2 0V8H10M0 2H8V10" fill="none" stroke="#d6d6d6" stroke-width="1"/></svg>
<svg style="left:951.5px;top:400px;" width="9" height="10" viewBox="0 0 9 10"><rect x="0.5" y="4.5" width="8" height="5.5" fill="#d6d6d6"/><path d="M2.3 4.5V3Q2.3 0.8 4.5 0.8Q6.7 0.8 6.7 3V4.5" fill="none" stroke="#d6d6d6" stroke-width="1.2"/><rect x="4" y="6" width="1" height="2" fill="#313131"/></svg>
<div class="t" style="left:973.60px;top:403.07px;font-size:7px;color:#8a8a8a;transform:scaleX(0.882);">Fill:</div>
<div class="a" style="left:986.7px;top:400.8px;width:31.2px;height:9.6px;background:#252525;"></div>
<div class="t" style="left:989.00px;top:402.67px;font-size:7px;color:#d0d0d0;transform:scaleX(0.894);">100%</div>
<div class="a" style="left:1008.5px;top:401.8px;width:0.8px;height:7.6px;background:#313131;"></div>
<svg style="left:1011.5px;top:404.5px;" width="5" height="3" viewBox="0 0 5 3"><path d="M0.3 0.3L2.5 2.5L4.7 0.3" fill="none" stroke="#999" stroke-width="0.9"/></svg>
<div class="a" style="left:871px;top:415.5px;width:147px;height:0.8px;background:#262626;"></div>
<div class="a" style="left:889px;top:416.2px;width:124.4px;height:20px;background:#474747;"></div>
<svg style="left:876.5px;top:424.5px;" width="9" height="5" viewBox="0 0 9 5"><path d="M0.3 2.5Q4.5 -1.5 8.7 2.5Q4.5 6.5 0.3 2.5Z" fill="#e0e0e0"/><circle cx="4.5" cy="2.5" r="1.3" fill="#313131"/></svg>
<div class="a" style="left:890.7px;top:417px;width:24.3px;height:17.7px;background:#fff;border:1px solid #bbb;
background-image:linear-gradient(45deg,#ddd 25%,transparent 25%,transparent 75%,#ddd 75%),linear-gradient(45deg,#ddd 25%,transparent 25%,transparent 75%,#ddd 75%);background-size:6px 6px;background-position:0 0,3px 3px"></div>
<svg style="left:892px;top:418px;" width="10" height="10" viewBox="0 0 10 10"><polygon points="5,0.5 9.5,3.8 7.8,9 2.2,9 0.5,3.8" fill="#7b3fc4"/></svg>
<svg style="left:904.5px;top:425px;" width="10" height="10" viewBox="0 0 10 10"><rect x="0.5" y="0.5" width="9" height="9" fill="#474747"/><path d="M2 2V8H8V2Z" fill="none" stroke="#ccc" stroke-width="0.9"/><rect x="1" y="1" width="2" height="2" fill="#ccc"/><rect x="7" y="1" width="2" height="2" fill="#ccc"/><rect x="1" y="7" width="2" height="2" fill="#ccc"/><rect x="7" y="7" width="2" height="2" fill="#ccc"/></svg>
<div class="t" style="left:919.20px;top:423.57px;font-size:7px;color:#e6e6e6;transform:scaleX(0.893);">Polygon 1</div>
<div class="a" style="left:871px;top:436.2px;width:147px;height:0.8px;background:#262626;"></div>
<svg style="left:876.5px;top:445px;" width="9" height="5" viewBox="0 0 9 5"><path d="M0.3 2.5Q4.5 -1.5 8.7 2.5Q4.5 6.5 0.3 2.5Z" fill="#e0e0e0"/><circle cx="4.5" cy="2.5" r="1.3" fill="#313131"/></svg>
<div class="a" style="left:893px;top:440px;width:20px;height:14.75px;background:#ffffff;"></div>
<div class="t" style="left:919.20px;top:444.57px;font-size:7px;color:#d8d8d8;font-style:italic;transform:scaleX(0.950);">Background</div>
<svg style="left:997px;top:442.5px;" width="7" height="9" viewBox="0 0 7 9"><rect x="0.5" y="3.5" width="6" height="5" fill="none" stroke="#cfcfcf" stroke-width="1"/><path d="M1.8 3.5V2.5Q1.8 0.7 3.5 0.7Q5.2 0.7 5.2 2.5V3.5" fill="none" stroke="#cfcfcf" stroke-width="1"/><rect x="3" y="5" width="1" height="2" fill="#cfcfcf"/></svg>
<div class="a" style="left:871px;top:457px;width:147px;height:0.8px;background:#2a2a2a;"></div>
<div class="a" style="left:871px;top:533px;width:153px;height:16px;background:#2b2b2b;"></div>
<svg style="left:894px;top:539px;" width="10" height="5" viewBox="0 0 10 5"><rect x="0.5" y="0.5" width="4.5" height="4" rx="2" fill="none" stroke="#777" stroke-width="0.9"/><rect x="5" y="0.5" width="4.5" height="4" rx="2" fill="none" stroke="#777" stroke-width="0.9"/></svg>
<div class="t" style="left:913px;top:535px;font-size:9.5px;font-style:italic;font-family:&quot;Liberation Serif&quot;,serif;color:#d0d0d0;line-height:10px">fx</div>
<svg style="left:921px;top:545px;" width="2" height="2" viewBox="0 0 2 2"><rect x="0" y="0" width="1.3" height="1.3" fill="#aaa"/></svg>
<svg style="left:928.5px;top:537.5px;" width="10" height="8" viewBox="0 0 10 8"><rect x="0" y="0" width="10" height="8" fill="#d0d0d0"/><circle cx="5" cy="4" r="2.3" fill="#2b2b2b"/></svg>
<svg style="left:946px;top:537px;" width="10" height="10" viewBox="0 0 10 10"><circle cx="5" cy="5" r="4" fill="#d0d0d0"/><path d="M2.2 7.8L7.8 2.2A4 4 0 0 1 2.2 7.8Z" fill="#666"/><rect x="8.5" y="8.5" width="1.3" height="1.3" fill="#aaa"/></svg>
<svg style="left:963px;top:537px;" width="11" height="9" viewBox="0 0 11 9"><path d="M0.5 1H4L5 2.3H10.5V8.5H0.5Z" fill="#d0d0d0"/></svg>
<svg style="left:980.5px;top:537px;" width="10" height="10" viewBox="0 0 10 10"><path d="M0.7 0.7H9.3V9.3H4L0.7 6Z" fill="none" stroke="#d0d0d0" stroke-width="1"/><path d="M0.7 6H4V9.3" fill="none" stroke="#d0d0d0" stroke-width="0.8"/></svg>
<svg style="left:998px;top:536px;" width="9" height="11" viewBox="0 0 9 11"><rect x="0" y="1.5" width="9" height="1.2" fill="#999"/><rect x="3" y="0" width="3" height="1.5" fill="#999"/><path d="M1 3H8L7.5 10.5H1.5Z" fill="#999"/></svg>
<div class="t" style="left:31.00px;top:541.80px;font-size:6.5px;color:#c8c8c8;font-weight:bold;transform:scaleX(0.953);">33.33%</div>
<div class="t" style="left:83.00px;top:541.80px;font-size:6.5px;color:#a8a8a8;transform:scaleX(1.000);">Doc: 9.01M/0 bytes</div>
<svg style="left:168px;top:542px;" width="3" height="6" viewBox="0 0 3 6"><path d="M0.3 0.3L2.5 3L0.3 5.7" fill="none" stroke="#999" stroke-width="0.8"/></svg>
<svg style="left:10px;top:558px;" width="11" height="11" viewBox="0 0 11 11"><path d="M0 1.6L4.6 1V5.2H0ZM5.3 0.9L11 0.1V5.2H5.3ZM0 5.9H4.6V10.1L0 9.5ZM5.3 5.9H11V11L5.3 10.2Z" fill="#f2f2f2"/></svg>
<svg style="left:37px;top:557px;" width="13" height="13" viewBox="0 0 13 13"><circle cx="6.5" cy="6.5" r="5.2" fill="none" stroke="#1c1c1c" stroke-width="1.9"/></svg>
<div class="t" style="left:56.80px;top:559.13px;font-size:9.3px;color:#5a5a5a;transform:scaleX(0.993);">Type here to search</div>
<svg style="left:234px;top:557px;" width="8" height="12" viewBox="0 0 8 12"><path d="M1.8 0.8H6.2V5.5Q6.2 8 4 8Q1.8 8 1.8 5.5Z" fill="#bbb" stroke="#555" stroke-width="0.9"/><path d="M4 8.5V11" stroke="#555" stroke-width="1"/></svg>
<svg style="left:261px;top:557px;" width="12" height="12" viewBox="0 0 12 12"><rect x="1.5" y="2.5" width="7" height="6" fill="none" stroke="#d0d0d0" stroke-width="1.2"/><path d="M0 1.5H10M0 9.8H10" stroke="#d0d0d0" stroke-width="1"/><path d="M11 2V10" stroke="#d0d0d0" stroke-width="1"/><rect x="10.3" y="5" width="1.5" height="1.5" fill="#fff"/></svg>
<div class="a" style="left:292px;top:555.5px;width:14px;height:14px;background:#1f0a3a;border:1px solid #8f7df0"></div>
<div class="t" style="left:293.80px;top:559.35px;font-size:7.5px;color:#a79bff;font-weight:bold;transform:scaleX(1.085);">Ae</div>
<div class="a" style="left:323.5px;top:555.5px;width:14px;height:14px;background:#2a0c00;border:1px solid #c66a1a"></div>
<div class="t" style="left:325.30px;top:559.35px;font-size:7.5px;color:#ff9a3a;font-weight:bold;transform:scaleX(1.387);">Ai</div>
<svg style="left:354.5px;top:555.5px;" width="15" height="15" viewBox="0 0 15 15"><circle cx="7.3" cy="7.3" r="7.1" fill="#e8453c"/><path d="M7.3 7.3L1.2 3.8A7.1 7.1 0 0 0 7.3 14.4Z" fill="#34a853"/><path d="M7.3 7.3L7.3 14.4A7.1 7.1 0 0 0 13.4 3.8Z" fill="#fbbc05"/><circle cx="7.3" cy="7.3" r="3.2" fill="#fff"/><circle cx="7.3" cy="7.3" r="2.4" fill="#4a78c8"/></svg>
<div class="a" style="left:348.8px;top:574.4px;width:26px;height:1.6px;background:#8ab0d8;"></div>
<div class="a" style="left:386px;top:555.8px;width:14px;height:13.3px;background:#061a06;border:1px solid #4c9c34"></div>
<div class="t" style="left:387.80px;top:558.95px;font-size:7.5px;color:#5fd03a;font-weight:bold;transform:scaleX(0.924);">Dw</div>
<div class="a" style="left:418px;top:555.8px;width:13.3px;height:13.3px;background:#2b0520;border:1px solid #7a2a62"></div>
<div class="t" style="left:419.80px;top:558.95px;font-size:7.5px;color:#f0c8ea;font-weight:bold;transform:scaleX(1.012);">Xd</div>
<div class="a" style="left:448.5px;top:555.8px;width:13.5px;height:13.3px;background:#1e0734;border:1px solid #8a4cc8"></div>
<div class="t" style="left:450.30px;top:558.95px;font-size:7.5px;color:#c28cff;font-weight:bold;transform:scaleX(1.250);">Pr</div>
<svg style="left:479.5px;top:556px;" width="15" height="12" viewBox="0 0 15 12"><path d="M0.5 1.5H5.5L7 3H14.5V11.5H0.5Z" fill="#e8b740"/><rect x="0.5" y="4.5" width="14" height="7" fill="#f6d26a"/><rect x="4.5" y="6.5" width="6" height="3" fill="#3aa0d8"/></svg>
<div class="a" style="left:511.5px;top:555.8px;width:13.5px;height:13.3px;background:#061a2e;border:1px solid #2a78b0"></div>
<div class="t" style="left:513.30px;top:558.95px;font-size:7.5px;color:#3a9ee0;font-weight:bold;transform:scaleX(1.079);">Ps</div>
<div class="a" style="left:543px;top:555.8px;width:14px;height:13.3px;background:#001a16;border:1px solid #1a8a72"></div>
<div class="t" style="left:544.80px;top:558.95px;font-size:7.5px;color:#2cc8a8;font-weight:bold;transform:scaleX(1.040);">Au</div>
<div class="t" style="left:575px;top:553px;font-size:17px;font-weight:bold;color:#1e78d8;line-height:17px">e</div>
<div class="a" style="left:597.4px;top:550.3px;width:30.9px;height:25.7px;background:#38383c;"></div>
<div class="a" style="left:606px;top:555.8px;width:14px;height:13.3px;background:#0a1e34;border:1px solid #3d8ed0"></div>
<div class="t" style="left:607.80px;top:558.95px;font-size:7.5px;color:#4aa4e8;font-weight:bold;transform:scaleX(1.134);">Ps</div>
<div class="a" style="left:597.4px;top:574.5px;width:30.9px;height:1.5px;background:#9cc4e4;"></div>
<svg style="left:636px;top:555px;" width="16" height="16" viewBox="0 0 16 16"><circle cx="7.9" cy="7.4" r="7" fill="#f0d2c8"/><circle cx="7.9" cy="7.4" r="5" fill="#e8703a"/><circle cx="7.9" cy="7.4" r="3.3" fill="#d83c10"/></svg>
<div class="a" style="left:631.4px;top:574.5px;width:25.8px;height:1.5px;background:#9cc4e4;"></div>
<div class="a" style="left:664px;top:550px;width:24px;height:26px;background:#8f8f95;"></div>
<div class="a" style="left:670.5px;top:557.5px;width:12px;height:12px;background:#d83008;border:1px solid #f4b090;box-shadow:0 0 1.5px #f8c0a0"></div>
<div class="a" style="left:688px;top:550px;width:12px;height:26px;background:#9fa0a8;"></div>
<svg style="left:688.5px;top:550.5px;" width="11" height="12" viewBox="0 0 11 12"><rect x="0.5" y="0.5" width="10" height="11" rx="2" fill="#b89aa4"/><circle cx="5.5" cy="6.3" r="3.6" fill="#f6eef0" stroke="#c05060" stroke-width="0.8"/><path d="M5.5 4.3V6.5H7" fill="none" stroke="#c05060" stroke-width="0.8"/><path d="M1.5 2.5L3 1.3M9.5 2.5L8 1.3" stroke="#f0e0e4" stroke-width="1"/></svg>
<svg style="left:688.5px;top:563px;" width="11" height="13" viewBox="0 0 11 13"><rect x="0.5" y="0.5" width="10" height="12" rx="2" fill="#b8cce0"/><rect x="2.8" y="2.5" width="2" height="8" fill="#3e78c0"/><rect x="6.3" y="2.5" width="2" height="8" fill="#3e78c0"/></svg>
<div class="a" style="left:700px;top:550px;width:47px;height:26px;background:#000000;"></div>
<svg style="left:550px;top:550px;" width="200" height="26" viewBox="0 0 200 26"><g transform="translate(153 8.600000000000023)"><rect x="0.00" y="0.00" width="4.60" height="1.10" fill="#9cc49c"/><rect x="3.50" y="0.00" width="1.10" height="5.40" fill="#9cc49c"/><rect x="3.50" y="5.40" width="1.10" height="5.40" fill="#9cc49c"/><rect x="0.00" y="9.70" width="4.60" height="1.10" fill="#9cc49c"/><rect x="0.00" y="5.40" width="1.10" height="5.40" fill="#9cc49c"/><rect x="0.00" y="0.00" width="1.10" height="5.40" fill="#9cc49c"/></g><g transform="translate(159.10000000000002 8.600000000000023)"><rect x="0.00" y="0.00" width="4.60" height="1.10" fill="#9cc49c"/><rect x="3.50" y="0.00" width="1.10" height="5.40" fill="#9cc49c"/><rect x="3.50" y="5.40" width="1.10" height="5.40" fill="#9cc49c"/><rect x="0.00" y="9.70" width="4.60" height="1.10" fill="#9cc49c"/><rect x="0.00" y="5.40" width="1.10" height="5.40" fill="#9cc49c"/><rect x="0.00" y="0.00" width="1.10" height="5.40" fill="#9cc49c"/></g><rect x="165.20" y="11" width="1.1" height="1.1" fill="#9cc49c"/><rect x="165.20" y="16" width="1.1" height="1.1" fill="#9cc49c"/><g transform="translate(167.5 8.600000000000023)"><rect x="0.00" y="0.00" width="4.60" height="1.10" fill="#9cc49c"/><rect x="3.50" y="0.00" width="1.10" height="5.40" fill="#9cc49c"/><rect x="3.50" y="5.40" width="1.10" height="5.40" fill="#9cc49c"/><rect x="0.00" y="9.70" width="4.60" height="1.10" fill="#9cc49c"/><rect x="0.00" y="5.40" width="1.10" height="5.40" fill="#9cc49c"/><rect x="0.00" y="0.00" width="1.10" height="5.40" fill="#9cc49c"/></g><g transform="translate(173.60000000000002 8.600000000000023)"><rect x="0.00" y="0.00" width="4.60" height="1.10" fill="#9cc49c"/><rect x="3.50" y="0.00" width="1.10" height="5.40" fill="#9cc49c"/><rect x="3.50" y="5.40" width="1.10" height="5.40" fill="#9cc49c"/><rect x="0.00" y="9.70" width="4.60" height="1.10" fill="#9cc49c"/><rect x="0.00" y="5.40" width="1.10" height="5.40" fill="#9cc49c"/><rect x="0.00" y="0.00" width="1.10" height="5.40" fill="#9cc49c"/></g><rect x="179.70" y="11" width="1.1" height="1.1" fill="#9cc49c"/><rect x="179.70" y="16" width="1.1" height="1.1" fill="#9cc49c"/><g transform="translate(182.0 8.600000000000023)"><rect x="3.50" y="0.00" width="1.10" height="5.40" fill="#9cc49c"/><rect x="3.50" y="5.40" width="1.10" height="5.40" fill="#9cc49c"/><rect x="0.00" y="0.00" width="1.10" height="5.40" fill="#9cc49c"/><rect x="0.00" y="4.85" width="4.60" height="1.10" fill="#9cc49c"/></g><g transform="translate(188.10000000000002 8.600000000000023)"><rect x="0.00" y="0.00" width="4.60" height="1.10" fill="#9cc49c"/><rect x="3.50" y="0.00" width="1.10" height="5.40" fill="#9cc49c"/><rect x="3.50" y="5.40" width="1.10" height="5.40" fill="#9cc49c"/><rect x="0.00" y="9.70" width="4.60" height="1.10" fill="#9cc49c"/><rect x="0.00" y="5.40" width="1.10" height="5.40" fill="#9cc49c"/><rect x="0.00" y="0.00" width="1.10" height="5.40" fill="#9cc49c"/><rect x="0.00" y="4.85" width="4.60" height="1.10" fill="#9cc49c"/></g></svg>
<div class="a" style="left:747px;top:550px;width:48px;height:26px;background:#c8ccd4;"></div>
<svg style="left:747px;top:550px;" width="48" height="26" viewBox="0 0 48 26"><rect x="0" y="0" width="48" height="12.5" fill="#c6cad2"/><rect x="0" y="13.5" width="48" height="12.5" fill="#bcc0c8"/><rect x="0" y="12.5" width="48" height="1" fill="#e8e8ee"/><path d="M3 4H5L8 1.8V10.2L5 8H3Z" fill="#8ab4e0"/><path d="M9.3 3.8Q10.5 6 9.3 8.2" fill="none" stroke="#8ab4e0" stroke-width="0.8"/><rect x="4" y="15" width="3" height="6" rx="1.5" fill="#8ab4e0"/><path d="M3 19Q5.5 23 8 19M5.5 22V25" fill="none" stroke="#8ab4e0" stroke-width="0.7"/><rect x="15.00" y="9.00" width="2.2" height="2.00" fill="#222"/><rect x="15.00" y="22.50" width="2.2" height="2.00" fill="#222"/><rect x="18.50" y="8.10" width="2.2" height="2.90" fill="#222"/><rect x="18.50" y="21.60" width="2.2" height="2.90" fill="#222"/><rect x="22.00" y="7.20" width="2.2" height="3.80" fill="#222"/><rect x="22.00" y="20.70" width="2.2" height="3.80" fill="#222"/><rect x="25.50" y="6.30" width="2.2" height="4.70" fill="#222"/><rect x="25.50" y="19.80" width="2.2" height="4.70" fill="#222"/><rect x="29.00" y="5.40" width="2.2" height="5.60" fill="#222"/><rect x="29.00" y="18.90" width="2.2" height="5.60" fill="#222"/><rect x="32.50" y="4.50" width="2.2" height="6.50" fill="#222"/><rect x="32.50" y="18.00" width="2.2" height="6.50" fill="#222"/><rect x="36.00" y="3.60" width="2.2" height="7.40" fill="#222"/><rect x="36.00" y="17.10" width="2.2" height="7.40" fill="#222"/><rect x="39.50" y="2.70" width="2.2" height="8.30" fill="#222"/><rect x="39.50" y="16.20" width="2.2" height="8.30" fill="#222"/><rect x="43.00" y="1.80" width="2.2" height="9.20" fill="#222"/><rect x="43.00" y="15.30" width="2.2" height="9.20" fill="#222"/><rect x="46.50" y="0.90" width="2.2" height="10.10" fill="#2a78c8"/><rect x="46.50" y="14.40" width="2.2" height="10.10" fill="#2a78c8"/></svg>
<div class="a" style="left:795px;top:550px;width:61px;height:26px;background:#a0a4ac;"></div>
<div class="a" style="left:795.5px;top:550.5px;width:11.2px;height:12px;background:#9ca2ac;"></div>
<div class="a" style="left:795.5px;top:563.5px;width:11.2px;height:12px;background:#aeb2b8;"></div>
<div class="a" style="left:807.7px;top:550.5px;width:11.2px;height:12px;background:#9ca2ac;"></div>
<div class="a" style="left:807.7px;top:563.5px;width:11.2px;height:12px;background:#aeb2b8;"></div>
<div class="a" style="left:819.9px;top:550.5px;width:11.2px;height:12px;background:#9ca2ac;"></div>
<div class="a" style="left:819.9px;top:563.5px;width:11.2px;height:12px;background:#aeb2b8;"></div>
<div class="a" style="left:832.1px;top:550.5px;width:11.2px;height:12px;background:#9ca2ac;"></div>
<div class="a" style="left:832.1px;top:563.5px;width:11.2px;height:12px;background:#aeb2b8;"></div>
<div class="a" style="left:844.3px;top:550.5px;width:11.2px;height:12px;background:#9ca2ac;"></div>
<div class="a" style="left:844.3px;top:563.5px;width:11.2px;height:12px;background:#aeb2b8;"></div>
<svg style="left:795px;top:550px;" width="61" height="26" viewBox="0 0 61 26"><circle cx="6" cy="6.5" r="4" fill="#6aa0e0"/><path d="M14 3.5H17.5L18.5 4.5H23V10H14Z" fill="#f0c43c"/><circle cx="30.5" cy="6.5" r="4" fill="#4a70b8"/><circle cx="30.5" cy="6.5" r="1.6" fill="#c0c8d8"/><path d="M38.5 3L46 10M40.5 2L47 8" stroke="#7a9ad0" stroke-width="1.5"/><path d="M52 3.5L57.5 9.5M57.5 3.5L52 9.5" stroke="#e05040" stroke-width="1.6"/><circle cx="6" cy="19" r="4" fill="#6a90c8"/><path d="M14.5 15V14.5H17M21 14.5H23V17M23 21V23.5H21M17 23.5H14.5V21" fill="none" stroke="#505860" stroke-width="1"/><rect x="25.5" y="15" width="10" height="8" fill="#2a2a2a"/><rect x="26.5" y="17" width="8" height="5" fill="#c0c0c0"/><rect x="37.5" y="14" width="11" height="10" fill="#e8e8e8"/><rect x="38.5" y="15" width="9" height="6" fill="#222"/><rect x="49.5" y="14" width="11" height="10" fill="#444"/><rect x="50.5" y="15" width="9" height="6" fill="#ddd"/></svg>
<svg style="left:868.5px;top:560px;" width="9" height="5" viewBox="0 0 9 5"><path d="M0.5 4.5L4.5 0.7L8.5 4.5" fill="none" stroke="#e0e0e0" stroke-width="1.1"/></svg>
<svg style="left:882.5px;top:558px;" width="12" height="8" viewBox="0 0 12 8"><path d="M2.5 7.5Q0 7.5 0.3 5.5Q0.6 3.8 2.4 4Q3 1 6 1Q9 1 9.3 3.6Q11.7 3.8 11.7 5.8Q11.7 7.5 9.5 7.5Z" fill="#f0f0f0"/></svg>
<svg style="left:898px;top:557px;" width="12" height="11" viewBox="0 0 12 11"><path d="M0.5 3.5H2.5L5.5 1V10L2.5 7.5H0.5Z" fill="none" stroke="#e6e6e6" stroke-width="1"/><path d="M7 3.5Q8.3 5.5 7 7.5M8.7 2Q10.8 5.5 8.7 9" fill="none" stroke="#e6e6e6" stroke-width="0.9"/></svg>
<svg style="left:913px;top:557px;" width="12" height="11" viewBox="0 0 12 11"><rect x="3" y="1.5" width="8.5" height="6.5" fill="none" stroke="#e0e0e0" stroke-width="1"/><path d="M7 8V10M4.5 10.3H9.5" stroke="#e0e0e0" stroke-width="1"/><rect x="0.5" y="0.5" width="3.5" height="4" fill="#0b0b14" stroke="#e0e0e0" stroke-width="0.8"/></svg>
<div class="t" style="left:930.70px;top:559.47px;font-size:8.3px;color:#e8e8e8;transform:scaleX(0.795);">ENG</div>
<div class="t" style="left:956.80px;top:553.27px;font-size:8.3px;color:#f0f0f0;transform:scaleX(0.891);">8:11 PM</div>
<div class="t" style="left:953.00px;top:564.47px;font-size:8.3px;color:#f0f0f0;transform:scaleX(0.921);">4/18/2019</div>
<svg style="left:997px;top:556px;" width="18" height="17" viewBox="0 0 18 17"><path d="M1 1H14V10H6.5L4 12.5V10H1Z" fill="#f0f0f0"/><path d="M3 3.5H12M3 5.5H12M3 7.5H10" stroke="#0b0b14" stroke-width="0.8"/><circle cx="13" cy="11.5" r="4.6" fill="#2a2a30" stroke="#0b0b14" stroke-width="1"/><circle cx="13" cy="11.5" r="3.8" fill="none" stroke="#777" stroke-width="0.6"/><path d="M12.3 9.6L13.4 9V14" fill="none" stroke="#f0f0f0" stroke-width="1"/></svg>
<div class="a" style="left:1021px;top:550px;width:1px;height:26px;background:#333;"></div>
<div class="a" style="left:576.8px;top:59px;width:1.2px;height:7.5px;background:#d8d8d8;"></div>
<div class="a" style="left:27px;top:366.3px;width:6px;height:1.2px;background:#d8d8d8;"></div>
</body></html>
